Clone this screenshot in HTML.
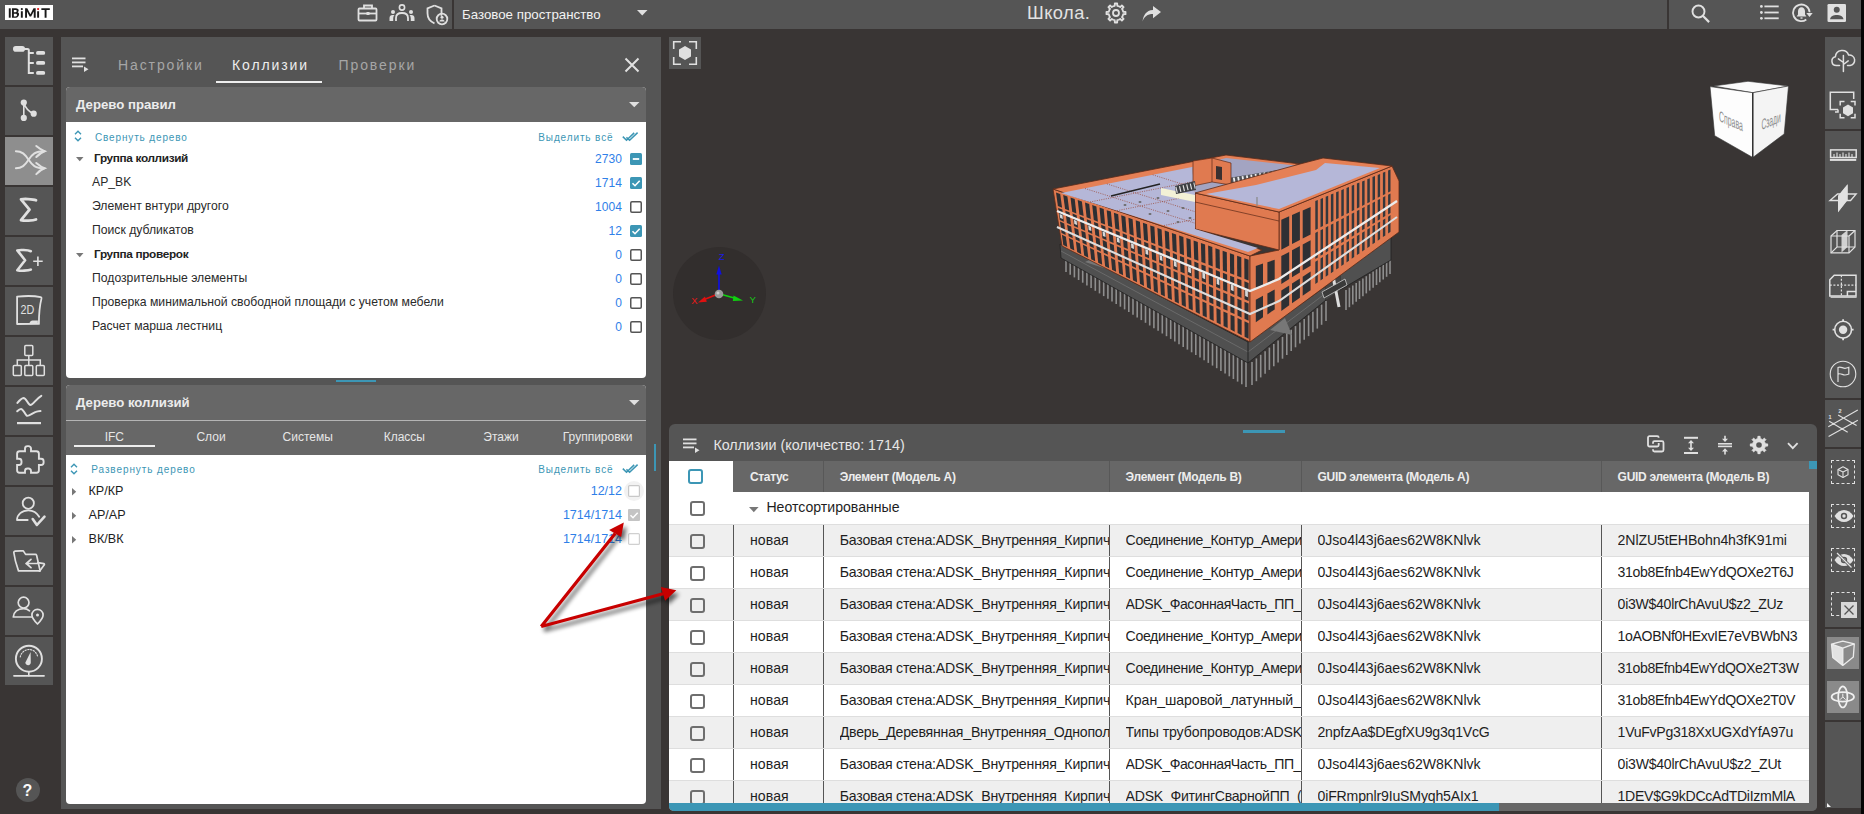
<!DOCTYPE html>
<html><head><meta charset="utf-8">
<style>
*{box-sizing:border-box;margin:0;padding:0}
html,body{width:1864px;height:814px;overflow:hidden;background:#393534;font-family:"Liberation Sans",sans-serif;position:relative}
.a{position:absolute}
.t{position:absolute;white-space:nowrap;line-height:1}
svg{position:absolute;overflow:visible}
.clip{position:absolute;overflow:hidden;white-space:nowrap}
</style></head><body>

<div class="a" style="left:0px;top:0px;width:1861px;height:29px;background:#555555;"></div>
<div class="a" style="left:5px;top:5px;width:48px;height:15px;background:#fff;"></div>
<svg style="left:5px;top:5px;" width="48" height="15" viewBox="0 0 48 15"><g transform="translate(3.8 3.3) scale(1.206 1.175) translate(-4 -3.5)">
<g fill="#1a1a1a">
<rect x="4" y="3.5" width="1.6" height="8"/>
<path d="M6.6 3.5h3.2c1.6 0 2.4 0.8 2.4 1.9c0 0.7-0.4 1.2-0.9 1.5c0.8 0.3 1.2 0.9 1.2 1.7c0 1.5-1.1 2.9-2.7 2.9h-3.2z M8.2 4.9v2h1.4c0.6 0 1-0.4 1-1c0-0.6-0.4-1-1-1z M8.2 8.2v2.2h1.5c0.7 0 1.1-0.5 1.1-1.1c0-0.6-0.4-1.1-1.1-1.1z"/>
<rect x="14" y="6" width="1.6" height="5.5"/>
<circle cx="14.8" cy="4.2" r="0.9"/>
<path d="M17.5 11.5v-8h1.8l2.6 5l2.6-5h1.8v8h-1.6v-5.2l-2.2 4.2h-1.2l-2.2-4.2v5.2z"/>
<rect x="27.5" y="6" width="1.6" height="5.5"/>
<path d="M31 3.5h7v1.5h-2.7v6.5h-1.6v-6.5h-2.7z"/>
</g>
<circle cx="28.3" cy="4.2" r="0.9" fill="#e01010"/></g>
</svg>
<svg style="left:357px;top:3px;" width="22" height="19" viewBox="0 0 22 19"><g fill="none" stroke="#e0e0e0" stroke-width="1.8">
<rect x="1.5" y="5.5" width="18" height="12" rx="1"/>
<path d="M7 5.5v-3h8v3"/><path d="M1.5 10.5h18"/></g>
<rect x="9.5" y="9" width="3" height="3" fill="#e0e0e0"/></svg>
<svg style="left:389px;top:4px;" width="26" height="18" viewBox="0 0 26 18"><g fill="#e0e0e0">
<circle cx="13" cy="3.5" r="2.6" fill="none" stroke="#e0e0e0" stroke-width="1.6"/>
<circle cx="4" cy="8" r="2"/><circle cx="22" cy="8" r="2"/>
<path d="M0.5 17v-3c0-2 1.2-3 3-3h2c-1 1-1.3 2.5-1.3 4v2z"/>
<path d="M25.5 17v-3c0-2-1.2-3-3-3h-2c1 1 1.3 2.5 1.3 4v2z"/>
</g>
<path d="M7 17v-3c0-3 2-5 6-5s6 2 6 5v3" fill="none" stroke="#e0e0e0" stroke-width="1.8"/></svg>
<svg style="left:426px;top:4px;" width="22" height="21" viewBox="0 0 22 21"><path d="M8.5 1.5l7 2.8v5c0 1 -0.1 1.8-0.3 2.5M8.5 1.5l-7 2.8v5c0 5 3 8.5 7 10" fill="none" stroke="#e0e0e0" stroke-width="1.8"/>
<circle cx="16" cy="15" r="5.3" fill="none" stroke="#e0e0e0" stroke-width="1.8"/>
<circle cx="16" cy="13.3" r="1.5" fill="#e0e0e0"/><path d="M13.3 17.6c0.5-1.5 1.5-2 2.7-2s2.2 0.5 2.7 2z" fill="#e0e0e0"/></svg>
<div class="a" style="left:452px;top:0px;width:2px;height:29px;background:#393534;"></div>
<div class="t" style="left:462px;top:8.14px;font-size:13.3px;color:#f2f2f2;font-weight:normal;letter-spacing:0px;">Базовое пространство</div>
<svg style="left:637px;top:10px;" width="11" height="6" viewBox="0 0 11 6"><path d="M0 0h10.5l-5.25 5.5z" fill="#e0e0e0"/></svg>
<div class="t" style="left:1027px;top:3.51px;font-size:18.3px;color:#e2e2e2;font-weight:normal;letter-spacing:0.45px;">Школа.</div>
<svg style="left:1105px;top:3px;" width="22" height="21" viewBox="0 0 22 21"><path d="M8.21 3.26L9.74 2.81L9.80 0.48L12.20 0.48L12.26 2.81L13.79 3.26L13.79 3.26L15.20 4.03L16.88 2.41L18.59 4.12L16.97 5.80L17.74 7.21L17.74 7.21L18.19 8.74L20.52 8.80L20.52 11.20L18.19 11.26L17.74 12.79L17.74 12.79L16.97 14.20L18.59 15.88L16.88 17.59L15.20 15.97L13.79 16.74L13.79 16.74L12.26 17.19L12.20 19.52L9.80 19.52L9.74 17.19L8.21 16.74L8.21 16.74L6.80 15.97L5.12 17.59L3.41 15.88L5.03 14.20L4.26 12.79L4.26 12.79L3.81 11.26L1.48 11.20L1.48 8.80L3.81 8.74L4.26 7.21L4.26 7.21L5.03 5.80L3.41 4.12L5.12 2.41L6.80 4.03L8.21 3.26Z" fill="none" stroke="#e0e0e0" stroke-width="1.8" stroke-linejoin="round"/><circle cx="11" cy="10" r="3" fill="none" stroke="#e0e0e0" stroke-width="1.8"/></svg>
<svg style="left:1142px;top:6px;" width="20" height="16" viewBox="0 0 20 16"><path d="M0.5 15.5c1.5-5 5-7.5 10.5-7.5v4.2l8-6.2l-8-6v4c-7 0.5-9.5 5-10.5 11.5z" fill="#e0e0e0"/></svg>
<div class="a" style="left:1667px;top:0px;width:2px;height:29px;background:#393534;"></div>
<svg style="left:1691px;top:4px;" width="20" height="19" viewBox="0 0 20 19"><circle cx="7.5" cy="7.5" r="6" fill="none" stroke="#e0e0e0" stroke-width="1.9"/><path d="M11.8 11.8l6.3 6.3" stroke="#e0e0e0" stroke-width="2.2"/></svg>
<svg style="left:1759px;top:4px;" width="21" height="17" viewBox="0 0 21 17"><g fill="#e0e0e0"><circle cx="2.4" cy="2.4" r="1.4"/><circle cx="2.4" cy="8.5" r="1.4"/><circle cx="2.4" cy="14.3" r="1.4"/><rect x="5.4" y="1.5" width="14.3" height="1.8"/><rect x="5.4" y="7.6" width="14.3" height="1.8"/><rect x="5.4" y="13.4" width="14.3" height="1.8"/></g></svg>
<svg style="left:1792px;top:3px;" width="23" height="20" viewBox="0 0 23 20"><path d="M17.6 9.2A8.3 8.3 0 1 0 14.3 16.5" fill="none" stroke="#e0e0e0" stroke-width="1.8"/>
<path d="M14.3 10.1h6.4l-3.2 3.8z" fill="#e0e0e0"/>
<path d="M9.5 4.2c-2.1 0-3.5 1.8-3.5 4v3.3l-1.4 2h9.8l-1.4-2v-3.3c0-2.2-1.4-4-3.5-4z" fill="#e0e0e0"/>
<ellipse cx="9.5" cy="15" rx="1.3" ry="0.8" fill="#e0e0e0"/></svg>
<svg style="left:1827px;top:4px;" width="20" height="18" viewBox="0 0 20 18"><rect x="0.5" y="0" width="18.5" height="18" rx="1.3" fill="#e0e0e0"/>
<circle cx="9.75" cy="5.8" r="3" fill="#555555"/>
<path d="M3 15.2c0.5-3 3.5-4.3 6.75-4.3s6.25 1.3 6.75 4.3z" fill="#555555"/></svg>
<div class="a" style="left:5px;top:37px;width:48px;height:48px;background:#555555;"></div>
<div class="a" style="left:5px;top:87px;width:48px;height:48px;background:#555555;"></div>
<div class="a" style="left:5px;top:137px;width:48px;height:48px;background:#8e8e8e;"></div>
<div class="a" style="left:5px;top:187px;width:48px;height:48px;background:#555555;"></div>
<div class="a" style="left:5px;top:237px;width:48px;height:48px;background:#555555;"></div>
<div class="a" style="left:5px;top:287px;width:48px;height:48px;background:#555555;"></div>
<div class="a" style="left:5px;top:337px;width:48px;height:48px;background:#555555;"></div>
<div class="a" style="left:5px;top:387px;width:48px;height:48px;background:#555555;"></div>
<div class="a" style="left:5px;top:437px;width:48px;height:48px;background:#555555;"></div>
<div class="a" style="left:5px;top:487px;width:48px;height:48px;background:#555555;"></div>
<div class="a" style="left:5px;top:537px;width:48px;height:48px;background:#555555;"></div>
<div class="a" style="left:5px;top:587px;width:48px;height:48px;background:#555555;"></div>
<div class="a" style="left:5px;top:637px;width:48px;height:48px;background:#555555;"></div>
<svg style="left:5px;top:37px;" width="48" height="48" viewBox="0 0 48 48"><g fill="#e0e0e0">
<rect x="8" y="9.1" width="12" height="5.6" rx="2.8"/>
<rect x="31" y="14" width="9.2" height="3.8" rx="1.9"/>
<rect x="31" y="24" width="9.2" height="3.8" rx="1.9"/>
<rect x="31" y="34" width="9.2" height="3.8" rx="1.9"/></g>
<path d="M18.5 11.9h4a1.3 1.3 0 0 1 1.3 1.3v22.7h5M23.8 15.9h5M23.8 25.9h5" fill="none" stroke="#e0e0e0" stroke-width="2"/></svg>
<svg style="left:5px;top:87px;" width="48" height="48" viewBox="0 0 48 48"><path d="M18.8 15.6v15.3M18.8 15.6c1.5 5 4 9 9.8 11" fill="none" stroke="#e0e0e0" stroke-width="1.6"/>
<g fill="#e0e0e0"><circle cx="18.8" cy="15.6" r="3.1"/><circle cx="18.8" cy="30.9" r="3.1"/><circle cx="28.7" cy="26.7" r="3.1"/></g></svg>
<svg style="left:5px;top:137px;" width="48" height="48" viewBox="0 0 48 48"><g fill="none" stroke="#e0e0e0" stroke-width="2" stroke-linecap="round">
<path d="M10.9 14.2c6 0 9 3 12.7 8.5s6.5 8.6 15.9 8.6"/>
<path d="M10.9 31.3c6 0 9-3 12.7-8.5s6.5-8.6 15.9-8.6"/>
<path d="M31.3 9c3 2.5 5 4 8.2 5.2c-3.2 1.2-5.5 3-8.2 5.8"/><path d="M31.3 26c3 2.5 5 4.1 8.2 5.3c-3.2 1.2-5.5 3-8.2 5.8"/></g></svg>
<svg style="left:5px;top:187px;" width="48" height="48" viewBox="0 0 48 48"><path d="M31 13.2c-3-1.3-13-1.5-15-0.8l8.5 10.2l-8.5 10.5c3 0.8 12 0.6 15-0.6" fill="none" stroke="#e0e0e0" stroke-width="2.8" stroke-linecap="round" stroke-linejoin="round"/></svg>
<svg style="left:5px;top:237px;" width="48" height="48" viewBox="0 0 48 48"><path d="M25.8 14.2c-3-1.3-11.5-1.5-13.5-0.8l7.8 9.8l-7.8 10c3 0.8 11 0.6 13.5-0.6" fill="none" stroke="#e0e0e0" stroke-width="2.6" stroke-linecap="round" stroke-linejoin="round"/>
<path d="M28.2 24.2h9.5M32.9 19.4v9.6" stroke="#e0e0e0" stroke-width="1.6"/></svg>
<svg style="left:5px;top:287px;" width="48" height="48" viewBox="0 0 48 48"><path d="M12.1 37V9.6c6-0.6 18-0.7 23.5 0.5c0.7 0.2 1 0.7 0.9 1.3c-1.5 6-2.6 14-2.6 25.5z" fill="none" stroke="#e0e0e0" stroke-width="1.8" stroke-linejoin="round"/>
<path d="M24.5 36c0.5-1.5 1.5-2.6 3-2.6h5.4v2.6z" fill="#e0e0e0"/>
<text transform="translate(15.6 26.9) scale(0.9 1)" font-family="Liberation Sans" font-size="12" fill="#e0e0e0">2D</text></svg>
<svg style="left:5px;top:337px;" width="48" height="48" viewBox="0 0 48 48"><g fill="none" stroke="#e0e0e0" stroke-width="1.5">
<rect x="19.8" y="8.5" width="8" height="10" rx="1"/>
<rect x="8.3" y="28.5" width="8" height="10" rx="1"/>
<rect x="19.8" y="28.5" width="8" height="10" rx="1"/>
<rect x="31.3" y="28.5" width="8" height="10" rx="1"/>
<path d="M23.8 18.5v10M12.3 28.5v-5.5h23v5.5"/></g></svg>
<svg style="left:5px;top:387px;" width="48" height="48" viewBox="0 0 48 48"><g fill="none" stroke="#e0e0e0" stroke-width="2" stroke-linecap="round">
<path d="M12.4 15.9c2-2.5 4-4.8 6.2-5c2.5 0 4.5 7 6.8 7.1c2.5 0 6-6.5 10.9-9.2"/>
<path d="M12.2 24.2c1.5-1.5 2.5-2.3 3.8-2.3c2.2 0 3.5 4.8 5.8 6.8c1.5 1 6-2.8 9-3.8c1.5-0.6 3.5-0.8 4.7-0.9"/></g>
<rect x="12" y="35" width="24" height="2.2" fill="#e0e0e0"/></svg>
<svg style="left:5px;top:437px;" width="48" height="48" viewBox="0 0 48 48"><path d="M14.6 14.2H20V11.6a2.5 2.5 0 0 1 2.5-2.5h1a2.5 2.5 0 0 1 2.5 2.5V14.2H31.4a2.5 2.5 0 0 1 2.5 2.5V21.8H36.1a2.5 2.5 0 0 1 2.5 2.5v1.2a2.5 2.5 0 0 1-2.5 2.5H33.9V33.2a2.5 2.5 0 0 1-2.5 2.5H26V34a2.5 2.5 0 0 0-2.5-2.5h-1a2.5 2.5 0 0 0-2.5 2.5V35.7H14.6a2.5 2.5 0 0 1-2.5-2.5V28H14a2.5 2.5 0 0 0 2.5-2.5v-1.2a2.5 2.5 0 0 0-2.5-2.5H12.1V16.7a2.5 2.5 0 0 1 2.5-2.5z" fill="none" stroke="#e0e0e0" stroke-width="1.9"/></svg>
<svg style="left:5px;top:487px;" width="48" height="48" viewBox="0 0 48 48"><g fill="none" stroke="#e0e0e0" stroke-width="1.8" stroke-linecap="round" stroke-linejoin="round">
<circle cx="23.3" cy="16.2" r="5.6"/>
<path d="M22.7 33H12c0-5.5 5-9.7 11.3-9.7c5 0 8.8 2.7 10.9 6.5"/>
<path d="M27.7 32l4.2 6l7.6-8.4" stroke-width="2.6"/></g></svg>
<svg style="left:5px;top:537px;" width="48" height="48" viewBox="0 0 48 48"><g fill="none" stroke="#e0e0e0" stroke-width="1.7" stroke-linejoin="round" stroke-linecap="round">
<path d="M13.5 33.9C11 27 9.5 21 8.8 15.5c0-0.8 0.5-1.3 1.3-1.4c2.5-0.3 5.5-0.4 8.2-0.2l2.3 3.5h9.8c0.6 0 1 0.3 1.2 0.8l3.5 15.7z"/>
<path d="M34.5 34.2l4.8-6.4c0.3-0.5 0-1-0.5-1.1l-6-1.1"/>
<path d="M21 26.5h12.5M26 22.4l-4.7 4.1l4.7 4.2"/></g></svg>
<svg style="left:5px;top:587px;" width="48" height="48" viewBox="0 0 48 48"><g fill="none" stroke="#e0e0e0" stroke-width="1.7" stroke-linecap="round" stroke-linejoin="round">
<circle cx="18.6" cy="15.6" r="5.4"/>
<path d="M24.5 23.8c-1.5-1.3-3.5-2.2-5.9-2.2c-6 0-10 3.5-10.3 8.4h18"/>
<path d="M32.5 37c-3-3-5.6-6-5.6-9c0-3.2 2.5-5.6 5.6-5.6s5.6 2.4 5.6 5.6c0 3-2.6 6-5.6 9z"/></g>
<circle cx="32.5" cy="28.1" r="1.5" fill="#e0e0e0"/></svg>
<svg style="left:5px;top:637px;" width="48" height="48" viewBox="0 0 48 48"><g fill="none" stroke="#e0e0e0" stroke-linecap="round">
<circle cx="23.9" cy="21.7" r="13" stroke-width="1.9"/>
<path d="M15.3 20a8.8 8.8 0 0 1 17.4 0" stroke-width="1.1" stroke-dasharray="1.3 1.5"/>
<path d="M9 38.8h30" stroke-width="1.8"/>
<path d="M23.8 35v3.8" stroke-width="1.6"/></g>
<path d="M20.3 25.8c0.3 1.5 1.6 2.5 3 2.4c1.5-0.1 2.5-1.3 2.5-2.7l-0.2-10.6z" fill="#e0e0e0"/></svg>
<div class="a" style="left:16px;top:778px;width:24px;height:24px;border-radius:50%;background:#555555"></div>
<div class="t" style="left:22.6px;top:782.76px;font-size:16px;color:#fafafa;font-weight:bold;letter-spacing:0px;">?</div>
<div class="a" style="left:61px;top:37px;width:600px;height:772px;background:#555555;"></div>
<svg style="left:72px;top:57px;" width="17" height="15" viewBox="0 0 17 15"><g fill="#e0e0e0"><rect x="0" y="0.5" width="13.5" height="1.8"/><rect x="0" y="4.5" width="13.5" height="1.8"/><rect x="0" y="8.5" width="11" height="1.8"/><path d="M12 9.5l4.5 2.7l-4.5 2.7z"/></g></svg>
<div class="t" style="left:118px;top:58.15px;font-size:14px;color:#a6a6a6;font-weight:normal;letter-spacing:1.9px;">Настройки</div>
<div class="t" style="left:232px;top:58.15px;font-size:14px;color:#ededed;font-weight:normal;letter-spacing:1.9px;">Коллизии</div>
<div class="t" style="left:338.5px;top:58.15px;font-size:14px;color:#a6a6a6;font-weight:normal;letter-spacing:1.9px;">Проверки</div>
<div class="a" style="left:216px;top:81px;width:106px;height:2.2px;background:#eeeeee;"></div>
<svg style="left:624px;top:57px;" width="16" height="16" viewBox="0 0 16 16"><path d="M1.5 1.5l13 13M14.5 1.5l-13 13" stroke="#e0e0e0" stroke-width="2"/></svg>
<div class="a" style="left:66px;top:87px;width:580px;height:291px;background:#fff;border-radius:4px;overflow:hidden"><div class="a" style="left:0;top:0;width:580px;height:35px;background:#676767"></div></div>
<div class="t" style="left:76px;top:98.33px;font-size:13.2px;color:#ececec;font-weight:bold;letter-spacing:0px;">Дерево правил</div>
<svg style="left:629px;top:102px;" width="11" height="6" viewBox="0 0 11 6"><path d="M0 0h10.5l-5.25 5.3z" fill="#e0e0e0"/></svg>
<svg style="left:74px;top:130px;" width="8" height="12" viewBox="0 0 8 12"><path d="M1 4.2l3-3l3 3M1 7.8l3 3l3-3" fill="none" stroke="#3c96b5" stroke-width="1.4"/></svg>
<div class="t" style="left:95px;top:132.53px;font-size:10px;color:#3c96b5;font-weight:normal;letter-spacing:0.85px;">Свернуть дерево</div>
<div class="t" style="right:1250.5px;top:132.53px;font-size:10px;color:#3c96b5;font-weight:normal;letter-spacing:0.88px">Выделить всё</div>
<svg style="left:622px;top:132px;" width="17" height="10" viewBox="0 0 17 10"><path d="M0.8 4.6L4.5 8.3L12.2 0.9M4.4 5.4L7.6 8.3L15.6 0.6" fill="none" stroke="#3c96b5" stroke-width="1.5"/></svg>
<svg style="left:76px;top:156.5px;" width="8" height="5" viewBox="0 0 8 5"><path d="M0 0h7.5l-3.75 4.2z" fill="#777"/></svg>
<div class="t" style="left:94px;top:152.81px;font-size:11.8px;color:#222;font-weight:bold;letter-spacing:-0.35px;">Группа коллизий</div>
<div class="t" style="right:1242.2px;top:153.14px;font-size:12px;color:#2f80e8;font-weight:normal;letter-spacing:0px">2730</div>
<svg style="left:630px;top:153px;" width="12" height="12" viewBox="0 0 12 12"><rect x="0" y="0" width="12" height="12" rx="1.5" fill="#3c96b5"/><rect x="2.8" y="5.1" width="6.4" height="1.8" fill="#fff"/></svg>
<div class="t" style="left:92px;top:175.67px;font-size:12.2px;color:#2a2a2a;font-weight:normal;letter-spacing:0px;">AP_BK</div>
<div class="t" style="right:1242.2px;top:177.14px;font-size:12px;color:#2f80e8;font-weight:normal;letter-spacing:0px">1714</div>
<svg style="left:630px;top:177px;" width="12" height="12" viewBox="0 0 12 12"><rect x="0" y="0" width="12" height="12" rx="1.5" fill="#3c96b5"/><path d="M2.5 6.2l2.5 2.5l4.7-5" fill="none" stroke="#fff" stroke-width="1.6"/></svg>
<div class="t" style="left:92px;top:199.67px;font-size:12.2px;color:#2a2a2a;font-weight:normal;letter-spacing:0px;">Элемент внтури другого</div>
<div class="t" style="right:1242.2px;top:201.14px;font-size:12px;color:#2f80e8;font-weight:normal;letter-spacing:0px">1004</div>
<svg style="left:630px;top:201px;" width="12" height="12" viewBox="0 0 12 12"><rect x="0.75" y="0.75" width="10.5" height="10.5" rx="1.2" fill="#fff" stroke="#555" stroke-width="1.5"/></svg>
<div class="t" style="left:92px;top:223.67px;font-size:12.2px;color:#2a2a2a;font-weight:normal;letter-spacing:0px;">Поиск дубликатов</div>
<div class="t" style="right:1242.2px;top:225.14px;font-size:12px;color:#2f80e8;font-weight:normal;letter-spacing:0px">12</div>
<svg style="left:630px;top:225px;" width="12" height="12" viewBox="0 0 12 12"><rect x="0" y="0" width="12" height="12" rx="1.5" fill="#3c96b5"/><path d="M2.5 6.2l2.5 2.5l4.7-5" fill="none" stroke="#fff" stroke-width="1.6"/></svg>
<svg style="left:76px;top:252.5px;" width="8" height="5" viewBox="0 0 8 5"><path d="M0 0h7.5l-3.75 4.2z" fill="#777"/></svg>
<div class="t" style="left:94px;top:248.81px;font-size:11.8px;color:#222;font-weight:bold;letter-spacing:-0.35px;">Группа проверок</div>
<div class="t" style="right:1242.2px;top:249.14px;font-size:12px;color:#2f80e8;font-weight:normal;letter-spacing:0px">0</div>
<svg style="left:630px;top:249px;" width="12" height="12" viewBox="0 0 12 12"><rect x="0.75" y="0.75" width="10.5" height="10.5" rx="1.2" fill="#fff" stroke="#555" stroke-width="1.5"/></svg>
<div class="t" style="left:92px;top:271.67px;font-size:12.2px;color:#2a2a2a;font-weight:normal;letter-spacing:0px;">Подозрительные элементы</div>
<div class="t" style="right:1242.2px;top:273.14px;font-size:12px;color:#2f80e8;font-weight:normal;letter-spacing:0px">0</div>
<svg style="left:630px;top:273px;" width="12" height="12" viewBox="0 0 12 12"><rect x="0.75" y="0.75" width="10.5" height="10.5" rx="1.2" fill="#fff" stroke="#555" stroke-width="1.5"/></svg>
<div class="t" style="left:92px;top:295.67px;font-size:12.2px;color:#2a2a2a;font-weight:normal;letter-spacing:0px;">Проверка минимальной свободной площади с учетом мебели</div>
<div class="t" style="right:1242.2px;top:297.14px;font-size:12px;color:#2f80e8;font-weight:normal;letter-spacing:0px">0</div>
<svg style="left:630px;top:297px;" width="12" height="12" viewBox="0 0 12 12"><rect x="0.75" y="0.75" width="10.5" height="10.5" rx="1.2" fill="#fff" stroke="#555" stroke-width="1.5"/></svg>
<div class="t" style="left:92px;top:319.67px;font-size:12.2px;color:#2a2a2a;font-weight:normal;letter-spacing:0px;">Расчет марша лестниц</div>
<div class="t" style="right:1242.2px;top:321.14px;font-size:12px;color:#2f80e8;font-weight:normal;letter-spacing:0px">0</div>
<svg style="left:630px;top:321px;" width="12" height="12" viewBox="0 0 12 12"><rect x="0.75" y="0.75" width="10.5" height="10.5" rx="1.2" fill="#fff" stroke="#555" stroke-width="1.5"/></svg>
<div class="a" style="left:336px;top:380px;width:40px;height:2px;background:#3c96b5;"></div>
<div class="a" style="left:66px;top:385px;width:580px;height:419px;background:#fff;border-radius:4px;overflow:hidden"><div class="a" style="left:0;top:0;width:580px;height:70px;background:#676767"></div><div class="a" style="left:0;top:35px;width:580px;height:1.2px;background:#b4b4b4"></div></div>
<div class="t" style="left:76px;top:396.13px;font-size:13.2px;color:#ececec;font-weight:bold;letter-spacing:0px;">Дерево коллизий</div>
<svg style="left:629px;top:400px;" width="11" height="6" viewBox="0 0 11 6"><path d="M0 0h10.5l-5.25 5.3z" fill="#e0e0e0"/></svg>
<div class="t" style="left:54.33px;width:120px;text-align:center;top:430.84px;font-size:12px;color:#e6e6e6">IFC</div>
<div class="t" style="left:151.00px;width:120px;text-align:center;top:430.84px;font-size:12px;color:#e6e6e6">Слои</div>
<div class="t" style="left:247.67px;width:120px;text-align:center;top:430.84px;font-size:12px;color:#e6e6e6">Системы</div>
<div class="t" style="left:344.33px;width:120px;text-align:center;top:430.84px;font-size:12px;color:#e6e6e6">Классы</div>
<div class="t" style="left:441.00px;width:120px;text-align:center;top:430.84px;font-size:12px;color:#e6e6e6">Этажи</div>
<div class="t" style="left:537.67px;width:120px;text-align:center;top:430.84px;font-size:12px;color:#e6e6e6">Группировки</div>
<div class="a" style="left:74px;top:445px;width:81px;height:2.2px;background:#eeeeee;"></div>
<svg style="left:70px;top:463px;" width="8" height="12" viewBox="0 0 8 12"><path d="M1 4.2l3-3l3 3M1 7.8l3 3l3-3" fill="none" stroke="#3c96b5" stroke-width="1.4"/></svg>
<div class="t" style="left:91.3px;top:464.74px;font-size:10px;color:#3c96b5;font-weight:normal;letter-spacing:0.9px;">Развернуть дерево</div>
<div class="t" style="right:1250.5px;top:464.74px;font-size:10px;color:#3c96b5;font-weight:normal;letter-spacing:0.88px">Выделить всё</div>
<svg style="left:622px;top:464px;" width="17" height="10" viewBox="0 0 17 10"><path d="M0.8 4.6L4.5 8.3L12.2 0.9M4.4 5.4L7.6 8.3L15.6 0.6" fill="none" stroke="#3c96b5" stroke-width="1.5"/></svg>
<svg style="left:72px;top:487.5px;" width="5" height="8" viewBox="0 0 5 8"><path d="M0 0v7.5l4.2-3.75z" fill="#777"/></svg>
<div class="t" style="left:88.5px;top:485.13px;font-size:12.6px;color:#1e1e1e;font-weight:normal;letter-spacing:0px;">КР/КР</div>
<div class="t" style="right:1242px;top:484.92px;font-size:12.5px;color:#2f80e8;font-weight:normal;letter-spacing:0px">12/12</div>
<svg style="left:72px;top:511.5px;" width="5" height="8" viewBox="0 0 5 8"><path d="M0 0v7.5l4.2-3.75z" fill="#777"/></svg>
<div class="t" style="left:88.5px;top:509.13px;font-size:12.6px;color:#1e1e1e;font-weight:normal;letter-spacing:0px;">АР/АР</div>
<div class="t" style="right:1242px;top:508.92px;font-size:12.5px;color:#2f80e8;font-weight:normal;letter-spacing:0px">1714/1714</div>
<svg style="left:72px;top:535.5px;" width="5" height="8" viewBox="0 0 5 8"><path d="M0 0v7.5l4.2-3.75z" fill="#777"/></svg>
<div class="t" style="left:88.5px;top:533.13px;font-size:12.6px;color:#1e1e1e;font-weight:normal;letter-spacing:0px;">ВК/ВК</div>
<div class="t" style="right:1242px;top:532.92px;font-size:12.5px;color:#2f80e8;font-weight:normal;letter-spacing:0px">1714/1714</div>
<div class="a" style="left:623.8px;top:481px;width:20px;height:20px;border-radius:50%;background:#f2f2f2"></div>
<svg style="left:627.8px;top:485px;" width="12" height="12" viewBox="0 0 12 12"><rect x="0.6" y="0.6" width="10.8" height="10.8" rx="1" fill="#fff" stroke="#c8c8c8" stroke-width="1.2"/></svg>
<svg style="left:627.8px;top:509px;" width="12" height="12" viewBox="0 0 12 12"><rect x="0" y="0" width="12" height="12" rx="1" fill="#c4c4c4"/><path d="M2.5 6.2l2.5 2.5l4.7-5" fill="none" stroke="#fff" stroke-width="1.5"/></svg>
<svg style="left:627.8px;top:533px;" width="12" height="12" viewBox="0 0 12 12"><rect x="0.6" y="0.6" width="10.8" height="10.8" rx="1" fill="#fff" stroke="#d0d0d0" stroke-width="1.2"/></svg>
<div class="a" style="left:654px;top:444px;width:2px;height:27px;background:#3c96b5;"></div>
<div class="a" style="left:669px;top:37px;width:32px;height:32px;background:#555555;"></div>
<svg style="left:669px;top:37px;" width="32" height="32" viewBox="0 0 32 32"><g fill="none" stroke="#e0e0e0" stroke-width="1.6">
<path d="M4.7 12v-7.2h7.3M20 4.8h7.3v7.2M27.3 20v7.2h-7.3M12 27.2h-7.3v-7.2"/></g>
<path d="M16 8.9l6 3.5v7l-6 3.5l-6-3.5v-7z" fill="#e0e0e0"/></svg>
<div class="a" style="left:672.5px;top:247px;width:93px;height:93px;border-radius:50%;background:#322e2d"></div>
<svg style="left:660px;top:230px;" width="130" height="120" viewBox="0 0 130 120">
<path d="M59 64V42" stroke="#1010e0" stroke-width="1.7"/>
<path d="M56.3 44.5L59 35.5L61.7 44.5z" fill="#1010e0"/>
<text x="58.8" y="30.2" font-family="Liberation Sans" font-size="9.5" fill="#1a1ae8">Z</text>
<path d="M58 64L43 70" stroke="#e01010" stroke-width="1.7"/>
<path d="M38 72.5L45 66.5L46.8 71.8z" fill="#e01010"/>
<text x="31.3" y="74.4" font-family="Liberation Sans" font-size="9.5" fill="#e81a1a">X</text>
<path d="M60 64L76 68.5" stroke="#10d010" stroke-width="1.7"/>
<path d="M83 70.5L73.5 65.5L72.8 71z" fill="#10d010"/>
<text x="89.6" y="73" font-family="Liberation Sans" font-size="9.5" fill="#18c818">Y</text>
<circle cx="59" cy="64" r="4.3" fill="#9a9a9a"/><circle cx="58" cy="63" r="1.5" fill="#ccc"/>
</svg>
<svg style="left:1700px;top:70px;" width="100" height="100" viewBox="0 0 100 100">
<path d="M13.3 16l34.7-4.7l40.5 4.7l-35.7 6.7z" fill="#fafafa" stroke="#333" stroke-width="0.6"/>
<path d="M10 16.6l42.8 6.1v64.8l-38.1-21.8z" fill="#fdfdfd" stroke="#333" stroke-width="0.6"/>
<path d="M52.8 22.7l35.7-6.7l-4.3 47.9l-31.4 23.6z" fill="#f4f4f4" stroke="#333" stroke-width="0.6"/>
<path d="M52.8 22.7v64.8" stroke="#222" stroke-width="1.2"/>
<text x="0" y="0" font-family="Liberation Sans" font-size="15" fill="#8c8c8c" transform="matrix(0.46 0.2 0 1 19 51)">Справа</text>
<text x="0" y="0" font-family="Liberation Sans" font-size="15" fill="#8c8c8c" transform="matrix(0.45 -0.19 0 1 61.4 60)">Сзади</text>
</svg>
<svg style="left:1030px;top:140px;overflow:hidden" width="390" height="260" viewBox="1030 140 390 260"><g><path d="M1066.0 259.0v13.0" stroke="#8e8e8e" stroke-width="1.6"/><path d="M1070.2 261.4v13.3" stroke="#8e8e8e" stroke-width="1.6"/><path d="M1074.4 263.8v13.6" stroke="#8e8e8e" stroke-width="1.6"/><path d="M1078.6 266.2v13.8" stroke="#8e8e8e" stroke-width="1.6"/><path d="M1082.7 268.6v14.1" stroke="#8e8e8e" stroke-width="1.6"/><path d="M1086.9 271.0v14.4" stroke="#8e8e8e" stroke-width="1.6"/><path d="M1091.1 273.4v14.7" stroke="#8e8e8e" stroke-width="1.6"/><path d="M1095.3 275.8v15.0" stroke="#8e8e8e" stroke-width="1.6"/><path d="M1099.5 278.2v15.2" stroke="#8e8e8e" stroke-width="1.6"/><path d="M1103.7 280.6v15.5" stroke="#8e8e8e" stroke-width="1.6"/><path d="M1107.9 283.0v15.8" stroke="#8e8e8e" stroke-width="1.6"/><path d="M1112.0 285.3v16.1" stroke="#8e8e8e" stroke-width="1.6"/><path d="M1116.2 287.7v16.3" stroke="#8e8e8e" stroke-width="1.6"/><path d="M1120.4 290.1v16.6" stroke="#8e8e8e" stroke-width="1.6"/><path d="M1124.6 292.5v16.9" stroke="#8e8e8e" stroke-width="1.6"/><path d="M1128.8 294.9v17.2" stroke="#8e8e8e" stroke-width="1.6"/><path d="M1133.0 297.3v17.5" stroke="#8e8e8e" stroke-width="1.6"/><path d="M1137.2 299.7v17.7" stroke="#8e8e8e" stroke-width="1.6"/><path d="M1141.3 302.1v18.0" stroke="#8e8e8e" stroke-width="1.6"/><path d="M1145.5 304.5v18.3" stroke="#8e8e8e" stroke-width="1.6"/><path d="M1149.7 306.9v18.6" stroke="#8e8e8e" stroke-width="1.6"/><path d="M1153.9 309.3v18.9" stroke="#8e8e8e" stroke-width="1.6"/><path d="M1158.1 311.7v19.1" stroke="#8e8e8e" stroke-width="1.6"/><path d="M1162.3 314.1v19.4" stroke="#8e8e8e" stroke-width="1.6"/><path d="M1166.5 316.5v19.7" stroke="#8e8e8e" stroke-width="1.6"/><path d="M1170.7 318.9v20.0" stroke="#8e8e8e" stroke-width="1.6"/><path d="M1174.8 321.3v20.3" stroke="#8e8e8e" stroke-width="1.6"/><path d="M1179.0 323.7v20.5" stroke="#8e8e8e" stroke-width="1.6"/><path d="M1183.2 326.1v20.8" stroke="#8e8e8e" stroke-width="1.6"/><path d="M1187.4 328.5v21.1" stroke="#8e8e8e" stroke-width="1.6"/><path d="M1191.6 330.9v21.4" stroke="#8e8e8e" stroke-width="1.6"/><path d="M1195.8 333.3v21.7" stroke="#8e8e8e" stroke-width="1.6"/><path d="M1200.0 335.7v21.9" stroke="#8e8e8e" stroke-width="1.6"/><path d="M1204.1 338.0v22.2" stroke="#8e8e8e" stroke-width="1.6"/><path d="M1208.3 340.4v22.5" stroke="#8e8e8e" stroke-width="1.6"/><path d="M1212.5 342.8v22.8" stroke="#8e8e8e" stroke-width="1.6"/><path d="M1216.7 345.2v23.0" stroke="#8e8e8e" stroke-width="1.6"/><path d="M1220.9 347.6v23.3" stroke="#8e8e8e" stroke-width="1.6"/><path d="M1225.1 350.0v23.6" stroke="#8e8e8e" stroke-width="1.6"/><path d="M1229.3 352.4v23.9" stroke="#8e8e8e" stroke-width="1.6"/><path d="M1233.4 354.8v24.2" stroke="#8e8e8e" stroke-width="1.6"/><path d="M1237.6 357.2v24.4" stroke="#8e8e8e" stroke-width="1.6"/><path d="M1241.8 359.6v24.7" stroke="#8e8e8e" stroke-width="1.6"/><path d="M1246.0 362.0v25.0" stroke="#8e8e8e" stroke-width="1.6"/><path d="M1252.0 362.0v23.0" stroke="#8e8e8e" stroke-width="1.6"/><path d="M1256.4 358.4v22.8" stroke="#8e8e8e" stroke-width="1.6"/><path d="M1260.7 354.8v22.6" stroke="#8e8e8e" stroke-width="1.6"/><path d="M1265.1 351.2v22.5" stroke="#8e8e8e" stroke-width="1.6"/><path d="M1269.4 347.6v22.3" stroke="#8e8e8e" stroke-width="1.6"/><path d="M1273.8 344.1v22.1" stroke="#8e8e8e" stroke-width="1.6"/><path d="M1278.1 340.5v21.9" stroke="#8e8e8e" stroke-width="1.6"/><path d="M1282.5 336.9v21.8" stroke="#8e8e8e" stroke-width="1.6"/><path d="M1286.8 333.3v21.6" stroke="#8e8e8e" stroke-width="1.6"/><path d="M1291.2 329.7v21.4" stroke="#8e8e8e" stroke-width="1.6"/><path d="M1295.5 326.1v21.2" stroke="#8e8e8e" stroke-width="1.6"/><path d="M1299.9 322.5v21.1" stroke="#8e8e8e" stroke-width="1.6"/><path d="M1304.2 318.9v20.9" stroke="#8e8e8e" stroke-width="1.6"/><path d="M1308.6 315.4v20.7" stroke="#8e8e8e" stroke-width="1.6"/><path d="M1312.9 311.8v20.5" stroke="#8e8e8e" stroke-width="1.6"/><path d="M1317.3 308.2v20.4" stroke="#8e8e8e" stroke-width="1.6"/><path d="M1321.6 304.6v20.2" stroke="#8e8e8e" stroke-width="1.6"/><path d="M1326.0 301.0v20.0" stroke="#8e8e8e" stroke-width="1.6"/><path d="M1346.0 290.0v20.0" stroke="#8e8e8e" stroke-width="1.6"/><path d="M1349.4 287.7v19.5" stroke="#8e8e8e" stroke-width="1.6"/><path d="M1352.8 285.4v19.1" stroke="#8e8e8e" stroke-width="1.6"/><path d="M1356.2 283.1v18.6" stroke="#8e8e8e" stroke-width="1.6"/><path d="M1359.5 280.8v18.2" stroke="#8e8e8e" stroke-width="1.6"/><path d="M1362.9 278.5v17.7" stroke="#8e8e8e" stroke-width="1.6"/><path d="M1366.3 276.2v17.2" stroke="#8e8e8e" stroke-width="1.6"/><path d="M1369.7 273.8v16.8" stroke="#8e8e8e" stroke-width="1.6"/><path d="M1373.1 271.5v16.3" stroke="#8e8e8e" stroke-width="1.6"/><path d="M1376.5 269.2v15.8" stroke="#8e8e8e" stroke-width="1.6"/><path d="M1379.8 266.9v15.4" stroke="#8e8e8e" stroke-width="1.6"/><path d="M1383.2 264.6v14.9" stroke="#8e8e8e" stroke-width="1.6"/><path d="M1386.6 262.3v14.5" stroke="#8e8e8e" stroke-width="1.6"/><path d="M1390.0 260.0v14.0" stroke="#8e8e8e" stroke-width="1.6"/><path d="M1060 244L1248 342L1326 286L1326 300L1248 363L1061 258z" fill="#505050" stroke="#222" stroke-width="0.8"/><path d="M1061 251L1248 352L1326 293" fill="none" stroke="#6a6a6a" stroke-width="1"/><path d="M1248 342L1248 363" stroke="#222" stroke-width="1"/><path d="M1340 268L1391 236L1391 260L1340 290z" fill="#505050" stroke="#222" stroke-width="0.8"/><path d="M1326 286L1340 276L1340 290L1326 300z" fill="#444"/><path d="M1333 276L1339 307" stroke="#ddd" stroke-width="3"/><path d="M1085 262L1100 255L1110 270z M1270 330L1285 318L1292 335z" fill="#777"/><path d="M1053 189L1250 256L1250 342L1062 246z" fill="#e07a50" stroke="#5b2a18" stroke-width="0.8"/><path d="M1056.0 192.4L1060.2 193.9L1062.1 207.8L1057.9 206.1z" fill="#2d2f33" /><path d="M1058.1 207.9L1062.3 209.5L1063.9 221.7L1059.8 219.9z" fill="#2d2f33" /><path d="M1060.0 221.6L1064.2 223.4L1065.7 235.0L1061.6 233.0z" fill="#2d2f33" /><path d="M1061.9 234.8L1065.9 236.7L1067.3 247.1L1063.3 245.1z" fill="#2d2f33" /><path d="M1059.6 213.9L1062.4 215.0L1062.9 219.0L1060.2 217.9z" fill="#d8d8d8" /><path d="M1063.2 194.9L1067.4 196.4L1069.2 210.6L1065.1 208.9z" fill="#2d2f33" /><path d="M1065.3 210.7L1069.5 212.3L1071.0 224.7L1066.9 222.9z" fill="#2d2f33" /><path d="M1067.1 224.7L1071.2 226.5L1072.7 238.3L1068.7 236.3z" fill="#2d2f33" /><path d="M1068.9 238.1L1073.0 240.0L1074.3 250.6L1070.3 248.6z" fill="#2d2f33" /><path d="M1070.5 197.5L1074.7 198.9L1076.4 213.4L1072.2 211.7z" fill="#2d2f33" /><path d="M1072.5 213.5L1076.6 215.2L1078.1 227.8L1074.0 226.0z" fill="#2d2f33" /><path d="M1074.2 227.8L1078.3 229.6L1079.8 241.6L1075.7 239.6z" fill="#2d2f33" /><path d="M1075.9 241.4L1080.0 243.4L1081.3 254.2L1077.2 252.1z" fill="#2d2f33" /><path d="M1073.9 219.7L1076.6 220.9L1077.1 225.1L1074.4 223.9z" fill="#d8d8d8" /><path d="M1077.7 200.0L1081.9 201.5L1083.6 216.1L1079.4 214.5z" fill="#2d2f33" /><path d="M1079.6 216.3L1083.8 218.0L1085.2 230.8L1081.1 229.0z" fill="#2d2f33" /><path d="M1081.3 230.8L1085.4 232.6L1086.8 244.9L1082.7 242.9z" fill="#2d2f33" /><path d="M1082.9 244.8L1087.0 246.7L1088.3 257.7L1084.2 255.6z" fill="#2d2f33" /><path d="M1085.0 202.5L1089.2 204.0L1090.8 218.9L1086.6 217.3z" fill="#2d2f33" /><path d="M1086.8 219.2L1090.9 220.8L1092.3 233.9L1088.2 232.1z" fill="#2d2f33" /><path d="M1088.4 233.9L1092.5 235.7L1093.8 248.1L1089.8 246.2z" fill="#2d2f33" /><path d="M1090.0 248.1L1094.0 250.0L1095.2 261.2L1091.2 259.2z" fill="#2d2f33" /><path d="M1088.2 225.6L1090.9 226.7L1091.4 231.1L1088.7 229.9z" fill="#d8d8d8" /><path d="M1092.2 205.1L1096.4 206.6L1097.9 221.7L1093.8 220.1z" fill="#2d2f33" /><path d="M1094.0 222.0L1098.1 223.6L1099.4 236.9L1095.3 235.1z" fill="#2d2f33" /><path d="M1095.5 237.0L1099.6 238.8L1100.9 251.4L1096.8 249.5z" fill="#2d2f33" /><path d="M1097.0 251.4L1101.1 253.3L1102.2 264.7L1098.2 262.7z" fill="#2d2f33" /><path d="M1099.5 207.6L1103.7 209.1L1105.1 224.5L1100.9 222.9z" fill="#2d2f33" /><path d="M1101.1 224.8L1105.3 226.5L1106.5 240.0L1102.4 238.2z" fill="#2d2f33" /><path d="M1102.6 240.1L1106.7 241.9L1107.9 254.7L1103.8 252.8z" fill="#2d2f33" /><path d="M1104.0 254.7L1108.1 256.7L1109.2 268.2L1105.1 266.2z" fill="#2d2f33" /><path d="M1102.5 231.5L1105.2 232.6L1105.6 237.1L1102.9 235.9z" fill="#d8d8d8" /><path d="M1106.7 210.2L1110.9 211.6L1112.3 227.3L1108.1 225.7z" fill="#2d2f33" /><path d="M1108.3 227.6L1112.4 229.3L1113.6 243.0L1109.5 241.2z" fill="#2d2f33" /><path d="M1109.7 243.2L1113.8 245.0L1114.9 258.0L1110.9 256.1z" fill="#2d2f33" /><path d="M1111.0 258.1L1115.1 260.0L1116.1 271.8L1112.1 269.7z" fill="#2d2f33" /><path d="M1113.9 212.7L1118.2 214.2L1119.4 230.1L1115.3 228.5z" fill="#2d2f33" /><path d="M1115.5 230.5L1119.6 232.1L1120.7 246.1L1116.6 244.3z" fill="#2d2f33" /><path d="M1116.8 246.3L1120.9 248.1L1122.0 261.3L1117.9 259.4z" fill="#2d2f33" /><path d="M1118.1 261.4L1122.1 263.3L1123.1 275.3L1119.1 273.3z" fill="#2d2f33" /><path d="M1116.7 237.3L1119.4 238.5L1119.8 243.1L1117.1 242.0z" fill="#d8d8d8" /><path d="M1121.2 215.2L1125.4 216.7L1126.6 232.9L1122.5 231.3z" fill="#2d2f33" /><path d="M1122.6 233.3L1126.8 234.9L1127.8 249.1L1123.7 247.3z" fill="#2d2f33" /><path d="M1123.9 249.3L1128.0 251.1L1129.0 264.6L1124.9 262.7z" fill="#2d2f33" /><path d="M1125.1 264.7L1129.2 266.7L1130.1 278.8L1126.0 276.8z" fill="#2d2f33" /><path d="M1128.4 217.8L1132.6 219.2L1133.8 235.7L1129.6 234.1z" fill="#2d2f33" /><path d="M1129.8 236.1L1133.9 237.8L1134.9 252.2L1130.8 250.4z" fill="#2d2f33" /><path d="M1131.0 252.4L1135.1 254.2L1136.0 267.9L1132.0 266.0z" fill="#2d2f33" /><path d="M1132.1 268.1L1136.2 270.0L1137.1 282.3L1133.0 280.3z" fill="#2d2f33" /><path d="M1131.0 243.2L1133.7 244.3L1134.0 249.1L1131.3 248.0z" fill="#d8d8d8" /><path d="M1135.7 220.3L1139.9 221.8L1141.0 238.5L1136.8 236.9z" fill="#2d2f33" /><path d="M1136.9 238.9L1141.1 240.6L1142.0 255.2L1137.9 253.4z" fill="#2d2f33" /><path d="M1138.1 255.5L1142.2 257.3L1143.1 271.2L1139.0 269.3z" fill="#2d2f33" /><path d="M1139.1 271.4L1143.2 273.3L1144.0 285.9L1140.0 283.8z" fill="#2d2f33" /><path d="M1142.9 222.8L1147.1 224.3L1148.1 241.3L1144.0 239.7z" fill="#2d2f33" /><path d="M1144.1 241.8L1148.3 243.4L1149.1 258.3L1145.0 256.5z" fill="#2d2f33" /><path d="M1145.2 258.6L1149.3 260.4L1150.1 274.5L1146.0 272.6z" fill="#2d2f33" /><path d="M1146.2 274.7L1150.2 276.7L1151.0 289.4L1147.0 287.3z" fill="#2d2f33" /><path d="M1145.3 249.1L1148.0 250.2L1148.3 255.1L1145.6 254.0z" fill="#d8d8d8" /><path d="M1150.2 225.4L1154.4 226.8L1155.3 244.1L1151.2 242.5z" fill="#2d2f33" /><path d="M1151.3 244.6L1155.4 246.2L1156.3 261.3L1152.1 259.5z" fill="#2d2f33" /><path d="M1152.3 261.7L1156.4 263.5L1157.2 277.8L1153.1 275.9z" fill="#2d2f33" /><path d="M1153.2 278.1L1157.3 280.0L1158.0 292.9L1153.9 290.9z" fill="#2d2f33" /><path d="M1157.4 227.9L1161.6 229.4L1162.5 246.9L1158.3 245.2z" fill="#2d2f33" /><path d="M1158.4 247.4L1162.6 249.1L1163.4 264.4L1159.2 262.6z" fill="#2d2f33" /><path d="M1159.3 264.8L1163.5 266.5L1164.2 281.1L1160.1 279.2z" fill="#2d2f33" /><path d="M1160.2 281.4L1164.3 283.3L1164.9 296.4L1160.9 294.4z" fill="#2d2f33" /><path d="M1159.5 254.9L1162.2 256.0L1162.5 261.1L1159.8 260.0z" fill="#d8d8d8" /><path d="M1164.7 230.4L1168.9 231.9L1169.7 249.7L1165.5 248.0z" fill="#2d2f33" /><path d="M1165.6 250.2L1169.8 251.9L1170.5 267.4L1166.3 265.6z" fill="#2d2f33" /><path d="M1166.4 267.8L1170.6 269.6L1171.2 284.4L1167.1 282.5z" fill="#2d2f33" /><path d="M1167.2 284.7L1171.3 286.6L1171.9 300.0L1167.9 297.9z" fill="#2d2f33" /><path d="M1171.9 233.0L1176.1 234.4L1176.8 252.5L1172.7 250.8z" fill="#2d2f33" /><path d="M1172.8 253.1L1176.9 254.7L1177.6 270.5L1173.4 268.7z" fill="#2d2f33" /><path d="M1173.5 270.9L1177.6 272.7L1178.3 287.7L1174.2 285.8z" fill="#2d2f33" /><path d="M1174.3 288.0L1178.3 290.0L1178.9 303.5L1174.8 301.4z" fill="#2d2f33" /><path d="M1173.8 260.8L1176.5 261.9L1176.7 267.2L1174.0 266.0z" fill="#d8d8d8" /><path d="M1179.1 235.5L1183.4 237.0L1184.0 255.2L1179.8 253.6z" fill="#2d2f33" /><path d="M1179.9 255.9L1184.1 257.5L1184.7 273.5L1180.5 271.7z" fill="#2d2f33" /><path d="M1180.6 274.0L1184.7 275.8L1185.3 291.0L1181.2 289.1z" fill="#2d2f33" /><path d="M1181.3 291.4L1185.4 293.3L1185.9 307.0L1181.8 305.0z" fill="#2d2f33" /><path d="M1186.4 238.0L1190.6 239.5L1191.2 258.0L1187.0 256.4z" fill="#2d2f33" /><path d="M1187.1 258.7L1191.3 260.4L1191.8 276.6L1187.6 274.8z" fill="#2d2f33" /><path d="M1187.7 277.1L1191.8 278.9L1192.3 294.3L1188.2 292.4z" fill="#2d2f33" /><path d="M1188.3 294.7L1192.4 296.6L1192.8 310.5L1188.8 308.5z" fill="#2d2f33" /><path d="M1188.1 266.7L1190.8 267.8L1191.0 273.2L1188.2 272.0z" fill="#d8d8d8" /><path d="M1193.6 240.6L1197.8 242.0L1198.4 260.8L1194.2 259.2z" fill="#2d2f33" /><path d="M1194.3 261.5L1198.4 263.2L1198.9 279.6L1194.7 277.8z" fill="#2d2f33" /><path d="M1194.8 280.2L1198.9 282.0L1199.4 297.6L1195.3 295.7z" fill="#2d2f33" /><path d="M1195.3 298.0L1199.4 300.0L1199.8 314.1L1195.8 312.0z" fill="#2d2f33" /><path d="M1200.9 243.1L1205.1 244.6L1205.5 263.6L1201.4 262.0z" fill="#2d2f33" /><path d="M1201.4 264.4L1205.6 266.0L1206.0 282.7L1201.8 280.9z" fill="#2d2f33" /><path d="M1201.9 283.3L1206.0 285.0L1206.4 300.9L1202.3 299.0z" fill="#2d2f33" /><path d="M1202.4 301.4L1206.4 303.3L1206.8 317.6L1202.7 315.5z" fill="#2d2f33" /><path d="M1202.3 272.5L1205.1 273.6L1205.2 279.2L1202.5 278.0z" fill="#d8d8d8" /><path d="M1208.1 245.6L1212.3 247.1L1212.7 266.4L1208.5 264.8z" fill="#2d2f33" /><path d="M1208.6 267.2L1212.7 268.8L1213.1 285.7L1208.9 283.9z" fill="#2d2f33" /><path d="M1209.0 286.3L1213.1 288.1L1213.4 304.2L1209.3 302.3z" fill="#2d2f33" /><path d="M1209.4 304.7L1213.5 306.6L1213.7 321.1L1209.7 319.1z" fill="#2d2f33" /><path d="M1215.4 248.2L1219.6 249.7L1219.9 269.2L1215.7 267.6z" fill="#2d2f33" /><path d="M1215.8 270.0L1219.9 271.7L1220.2 288.8L1216.1 287.0z" fill="#2d2f33" /><path d="M1216.1 289.4L1220.2 291.2L1220.5 307.5L1216.4 305.6z" fill="#2d2f33" /><path d="M1216.4 308.0L1220.5 310.0L1220.7 324.6L1216.7 322.6z" fill="#2d2f33" /><path d="M1216.6 278.4L1219.3 279.5L1219.4 285.2L1216.7 284.1z" fill="#d8d8d8" /><path d="M1222.6 250.7L1226.8 252.2L1227.0 272.0L1222.9 270.4z" fill="#2d2f33" /><path d="M1222.9 272.8L1227.1 274.5L1227.3 291.8L1223.2 290.0z" fill="#2d2f33" /><path d="M1223.2 292.5L1227.3 294.3L1227.5 310.8L1223.4 308.9z" fill="#2d2f33" /><path d="M1223.4 311.4L1227.5 313.3L1227.7 328.1L1223.6 326.1z" fill="#2d2f33" /><path d="M1229.9 253.3L1234.1 254.7L1234.2 274.8L1230.1 273.2z" fill="#2d2f33" /><path d="M1230.1 275.7L1234.2 277.3L1234.4 294.9L1230.3 293.1z" fill="#2d2f33" /><path d="M1230.3 295.6L1234.4 297.4L1234.5 314.1L1230.4 312.2z" fill="#2d2f33" /><path d="M1230.5 314.7L1234.5 316.6L1234.7 331.7L1230.6 329.6z" fill="#2d2f33" /><path d="M1230.9 284.3L1233.6 285.4L1233.6 291.2L1230.9 290.1z" fill="#d8d8d8" /><path d="M1237.1 255.8L1241.3 257.3L1241.4 277.6L1237.2 276.0z" fill="#2d2f33" /><path d="M1237.2 278.5L1241.4 280.1L1241.5 297.9L1237.4 296.1z" fill="#2d2f33" /><path d="M1237.4 298.7L1241.5 300.5L1241.6 317.4L1237.5 315.5z" fill="#2d2f33" /><path d="M1237.5 318.0L1241.6 319.9L1241.6 335.2L1237.6 333.1z" fill="#2d2f33" /><path d="M1244.3 258.3L1248.6 259.8L1248.6 280.4L1244.4 278.8z" fill="#2d2f33" /><path d="M1244.4 281.3L1248.6 283.0L1248.6 301.0L1244.5 299.2z" fill="#2d2f33" /><path d="M1244.5 301.8L1248.6 303.5L1248.6 320.7L1244.5 318.8z" fill="#2d2f33" /><path d="M1244.5 321.3L1248.6 323.3L1248.6 338.7L1244.6 336.7z" fill="#2d2f33" /><path d="M1245.1 290.1L1247.9 291.2L1247.9 297.2L1245.2 296.1z" fill="#d8d8d8" /><path d="M1250 256L1279 250L1279 212L1392 166L1399 181L1399 232L1250 342z" fill="#e07a50" stroke="#5b2a18" stroke-width="0.8"/><path d="M1281.3 219.7L1289.2 216.2L1289.2 245.6L1281.3 249.7z" fill="#2e3034" /><path d="M1281.3 256.1L1289.2 251.9L1289.2 279.1L1281.3 284.0z" fill="#2e3034" /><path d="M1281.3 290.5L1289.2 285.4L1289.2 305.3L1281.3 310.9z" fill="#2e3034" /><path d="M1292.0 215.0L1299.9 211.6L1299.9 240.0L1292.0 244.1z" fill="#2e3034" /><path d="M1292.0 250.3L1299.9 246.1L1299.9 272.4L1292.0 277.3z" fill="#2e3034" /><path d="M1292.0 283.6L1299.9 278.5L1299.9 297.7L1292.0 303.3z" fill="#2e3034" /><path d="M1302.7 210.4L1310.6 207.0L1310.6 234.4L1302.7 238.5z" fill="#2e3034" /><path d="M1302.7 244.5L1310.6 240.2L1310.6 265.7L1302.7 270.6z" fill="#2e3034" /><path d="M1302.7 276.7L1310.6 271.6L1310.6 290.2L1302.7 295.7z" fill="#2e3034" /><path d="M1315.3 201.1L1317.8 200.0L1317.8 228.7L1315.3 230.0z" fill="#34373c" /><path d="M1315.3 232.9L1317.8 231.6L1317.8 257.4L1315.3 258.9z" fill="#34373c" /><path d="M1315.3 261.8L1317.8 260.3L1317.8 282.3L1315.3 284.0z" fill="#34373c" /><path d="M1320.5 198.9L1323.0 197.9L1323.0 226.1L1320.5 227.3z" fill="#34373c" /><path d="M1320.5 230.2L1323.0 228.9L1323.0 254.3L1320.5 255.7z" fill="#34373c" /><path d="M1320.5 258.6L1323.0 257.1L1323.0 278.7L1320.5 280.4z" fill="#34373c" /><path d="M1325.7 196.7L1328.2 195.7L1328.2 223.4L1325.7 224.6z" fill="#34373c" /><path d="M1325.7 227.4L1328.2 226.1L1328.2 251.1L1325.7 252.6z" fill="#34373c" /><path d="M1325.7 255.4L1328.2 253.8L1328.2 275.1L1325.7 276.8z" fill="#34373c" /><path d="M1330.9 194.5L1333.4 193.5L1333.4 220.7L1330.9 222.0z" fill="#34373c" /><path d="M1330.9 224.7L1333.4 223.4L1333.4 247.9L1330.9 249.4z" fill="#34373c" /><path d="M1330.9 252.1L1333.4 250.6L1333.4 271.5L1330.9 273.2z" fill="#34373c" /><path d="M1336.1 192.3L1338.6 191.3L1338.6 218.0L1336.1 219.3z" fill="#34373c" /><path d="M1336.1 222.0L1338.6 220.7L1338.6 244.7L1336.1 246.2z" fill="#34373c" /><path d="M1336.1 248.9L1338.6 247.4L1338.6 267.9L1336.1 269.6z" fill="#34373c" /><path d="M1341.3 190.2L1343.8 189.1L1343.8 215.3L1341.3 216.6z" fill="#34373c" /><path d="M1341.3 219.2L1343.8 218.0L1343.8 241.6L1341.3 243.0z" fill="#34373c" /><path d="M1341.3 245.7L1343.8 244.2L1343.8 264.3L1341.3 266.0z" fill="#34373c" /><path d="M1346.5 188.0L1349.0 186.9L1349.0 212.7L1346.5 213.9z" fill="#34373c" /><path d="M1346.5 216.5L1349.0 215.2L1349.0 238.4L1346.5 239.9z" fill="#34373c" /><path d="M1346.5 242.5L1349.0 240.9L1349.0 260.7L1346.5 262.4z" fill="#34373c" /><path d="M1351.7 185.8L1354.2 184.8L1354.2 210.0L1351.7 211.2z" fill="#34373c" /><path d="M1351.7 213.8L1354.2 212.5L1354.2 235.2L1351.7 236.7z" fill="#34373c" /><path d="M1351.7 239.2L1354.2 237.7L1354.2 257.1L1351.7 258.7z" fill="#34373c" /><path d="M1356.9 183.6L1359.4 182.6L1359.4 207.3L1356.9 208.6z" fill="#34373c" /><path d="M1356.9 211.1L1359.4 209.8L1359.4 232.0L1356.9 233.5z" fill="#34373c" /><path d="M1356.9 236.0L1359.4 234.5L1359.4 253.4L1356.9 255.1z" fill="#34373c" /><path d="M1362.1 181.4L1364.6 180.4L1364.6 204.6L1362.1 205.9z" fill="#34373c" /><path d="M1362.1 208.3L1364.6 207.0L1364.6 228.8L1362.1 230.3z" fill="#34373c" /><path d="M1362.1 232.8L1364.6 231.3L1364.6 249.8L1362.1 251.5z" fill="#34373c" /><path d="M1367.3 179.2L1369.8 178.2L1369.8 201.9L1367.3 203.2z" fill="#34373c" /><path d="M1367.3 205.6L1369.8 204.3L1369.8 225.7L1367.3 227.2z" fill="#34373c" /><path d="M1367.3 229.6L1369.8 228.0L1369.8 246.2L1367.3 247.9z" fill="#34373c" /><path d="M1372.5 177.1L1375.0 176.0L1375.0 199.3L1372.5 200.5z" fill="#34373c" /><path d="M1372.5 202.9L1375.0 201.6L1375.0 222.5L1372.5 224.0z" fill="#34373c" /><path d="M1372.5 226.3L1375.0 224.8L1375.0 242.6L1372.5 244.3z" fill="#34373c" /><path d="M1377.7 174.9L1380.1 173.9L1380.1 196.6L1377.7 197.8z" fill="#34373c" /><path d="M1377.7 200.1L1380.1 198.9L1380.1 219.3L1377.7 220.8z" fill="#34373c" /><path d="M1377.7 223.1L1380.1 221.6L1380.1 239.0L1377.7 240.7z" fill="#34373c" /><path d="M1382.9 172.7L1385.3 171.7L1385.3 193.9L1382.9 195.2z" fill="#34373c" /><path d="M1382.9 197.4L1385.3 196.1L1385.3 216.1L1382.9 217.6z" fill="#34373c" /><path d="M1382.9 219.9L1385.3 218.4L1385.3 235.4L1382.9 237.1z" fill="#34373c" /><path d="M1388.1 170.5L1390.5 169.5L1390.5 191.2L1388.1 192.5z" fill="#34373c" /><path d="M1388.1 194.7L1390.5 193.4L1390.5 213.0L1388.1 214.5z" fill="#34373c" /><path d="M1388.1 216.7L1390.5 215.1L1390.5 231.8L1388.1 233.5z" fill="#34373c" /><path d="M1255.8 265.9L1263.0 263.6L1263.0 285.1L1255.8 288.5z" fill="#2d2f33" /><path d="M1267.4 262.2L1274.7 259.8L1274.7 279.6L1267.4 283.0z" fill="#2d2f33" /><path d="M1255.8 299.8L1263.0 295.8L1263.0 317.3L1255.8 322.3z" fill="#2d2f33" /><path d="M1267.4 293.5L1274.7 289.6L1274.7 309.4L1267.4 314.4z" fill="#2d2f33" /><path d="M1195 193L1279 212L1279 250L1195 229z" fill="#e07a50" stroke="#5b2a18" stroke-width="0.8"/><path d="M1195 202L1279 221" stroke="#5b2a18" stroke-width="0.7"/><path d="M1053 189L1226 155L1300 164L1195 193L1195 229L1262 250L1250 256z" fill="#e58056" stroke="#5b2a18" stroke-width="0.8"/><path d="M1061 193L1192 167L1195 193L1195 229L1258 248L1248 252z" fill="#b5b7d8"/><path d="M1117 210.7L1195 195.2" stroke="#9a4a3a" stroke-width="0.8" stroke-dasharray="1 1.3"/><path d="M1164 225.5L1195 219.3" stroke="#9a4a3a" stroke-width="0.8" stroke-dasharray="1 1.3"/><path d="M1090 202L1195 181.2" stroke="#9a4a3a" stroke-width="0.8" stroke-dasharray="1 1.3"/><path d="M1106.9 183.9L1195 211.7" stroke="#9a4a3a" stroke-width="0.8" stroke-dasharray="1 1.3"/><path d="M1152.7 174.8L1195 188.1" stroke="#9a4a3a" stroke-width="0.8" stroke-dasharray="1 1.3"/><path d="M1085 188.5L1195 223.2" stroke="#9a4a3a" stroke-width="0.8" stroke-dasharray="1 1.3"/><ellipse cx="1125" cy="205" rx="1.5" ry="0.9" fill="#6a6a6a"/><ellipse cx="1140" cy="202" rx="1.5" ry="0.9" fill="#6a6a6a"/><ellipse cx="1158" cy="198" rx="1.5" ry="0.9" fill="#6a6a6a"/><ellipse cx="1150" cy="214" rx="1.5" ry="0.9" fill="#6a6a6a"/><ellipse cx="1168" cy="211" rx="1.5" ry="0.9" fill="#6a6a6a"/><ellipse cx="1183" cy="208" rx="1.5" ry="0.9" fill="#6a6a6a"/><ellipse cx="1178" cy="222" rx="1.5" ry="0.9" fill="#6a6a6a"/><ellipse cx="1190" cy="218" rx="1.5" ry="0.9" fill="#6a6a6a"/><path d="M1111 196L1160 184" stroke="#222" stroke-width="1.4"/><path d="M1192 167L1226 158L1300 166L1255 184L1195 193z" fill="#a3a4c2"/><path d="M1228 178L1297 167L1298 172L1229 184z" fill="#505258"/><path d="M1229 181L1297 169.5" stroke="#eeeeee" stroke-width="5" stroke-dasharray="1.8 2.6"/><path d="M1193 161L1212 158L1231 163L1231 185L1212 182L1193 186z" fill="#e07a50" stroke="#5b2a18" stroke-width="0.7"/><path d="M1212 158L1212 182" stroke="#5b2a18" stroke-width="0.7"/><path d="M1216 166L1222 167L1222 180L1216 179z" fill="#3a3030"/><path d="M1161 188L1195 195L1195 202L1161 195z" fill="#f3f1d6"/><path d="M1175 186L1195 181L1196 190L1176 194z" fill="#3c3e42"/><path d="M1176 190L1195 185.5" stroke="#ddd" stroke-width="6" stroke-dasharray="1.2 2.5"/><path d="M1195 193L1300 164L1323 158L1392 166L1279 212z" fill="#e58056" stroke="#5b2a18" stroke-width="0.8"/><path d="M1206 194L1256 185L1316 170L1325 163L1380 168L1279 209z" fill="#b5b7d8"/><path d="M1257 197v9" stroke="#888" stroke-width="1.2"/><path d="M1057 211L1250 291L1279 279L1397 201" fill="none" stroke="#ececec" stroke-width="2.3"/><path d="M1057 227L1250 314L1279 301L1397 217" fill="none" stroke="#dcdcdc" stroke-width="2.1"/><path d="M1322 292L1345 279L1347 285L1324 298z" fill="#3a3a3a" stroke="#ccc" stroke-width="0.8"/></g></svg>
<div class="a" style="left:669px;top:424px;width:1148px;height:387px;background:#555555;border-radius:6px 6px 5px 5px;overflow:hidden">
<div class="a" style="left:0px;top:37px;width:64px;height:31px;background:#fff;"></div><div class="a" style="left:64px;top:37px;width:1084px;height:31px;background:#676767;"></div><div class="a" style="left:154px;top:37px;width:1px;height:31px;background:#585858;"></div><div class="a" style="left:440px;top:37px;width:1px;height:31px;background:#585858;"></div><div class="a" style="left:632px;top:37px;width:1px;height:31px;background:#585858;"></div><div class="a" style="left:932px;top:37px;width:1px;height:31px;background:#585858;"></div><div class="a" style="left:1140px;top:37px;width:8px;height:342px;background:#676767;"></div><div class="a" style="left:1140px;top:37px;width:8px;height:8px;background:#3c96b5;"></div><div class="a" style="left:0px;top:68px;width:1140px;height:311px;background:#fff;"></div><div class="a" style="left:0px;top:100px;width:1140px;height:1px;background:#dedede;"></div><div class="a" style="left:20.5px;top:77.30000000000001px;width:15px;height:15px;border:2px solid #6e6e6e;border-radius:3px;background:transparent"></div><svg style="left:80px;top:82.5px" width="10" height="6" viewBox="0 0 10 6"><path d="M0 0h9.6l-4.8 5.2z" fill="#777"/></svg><div class="t" style="left:97.39999999999998px;top:75.76px;font-size:14.1px;color:#1e1e1e;font-weight:normal;letter-spacing:0px">Неотсортированные</div><div class="a" style="left:0px;top:101px;width:1140px;height:31px;background:#efefef;"></div><div class="a" style="left:0px;top:132px;width:1140px;height:1px;background:#dedede;"></div><div class="a" style="left:64px;top:101px;width:1.4px;height:31px;background:#555;"></div><div class="a" style="left:154px;top:101px;width:1.4px;height:31px;background:#555;"></div><div class="a" style="left:440px;top:101px;width:1.4px;height:31px;background:#555;"></div><div class="a" style="left:632px;top:101px;width:1.4px;height:31px;background:#555;"></div><div class="a" style="left:932px;top:101px;width:1.4px;height:31px;background:#555;"></div><div class="a" style="left:20.5px;top:109.5px;width:15px;height:15px;border:2px solid #6e6e6e;border-radius:3px;background:transparent"></div><div class="t" style="left:81px;top:108.66px;font-size:14.1px;color:#1e1e1e;font-weight:normal;letter-spacing:0.07px">новая</div><div class="clip" style="left:170.70000000000005px;top:108.66px;width:269.29999999999995px;height:18.3px;font-size:14.1px;line-height:1;color:#1e1e1e;font-weight:normal;letter-spacing:-0.17px">Базовая стена:ADSK_Внутренняя_Кирпичная</div><div class="clip" style="left:456.5999999999999px;top:108.66px;width:175.4000000000001px;height:18.3px;font-size:14.1px;line-height:1;color:#1e1e1e;font-weight:normal;letter-spacing:-0.34px">Соединение_Контур_Американка</div><div class="clip" style="left:648.5px;top:108.66px;width:283.5px;height:18.3px;font-size:14.1px;line-height:1;color:#1e1e1e;font-weight:normal;letter-spacing:-0.033px">0Jso4l43j6aes62W8KNlvk</div><div class="clip" style="left:948.5999999999999px;top:108.66px;width:191.4000000000001px;height:18.3px;font-size:14.1px;line-height:1;color:#1e1e1e;font-weight:normal;letter-spacing:-0.107px">2NlZU5tEHBohn4h3fK91mi</div><div class="a" style="left:0px;top:133px;width:1140px;height:31px;background:#ffffff;"></div><div class="a" style="left:0px;top:164px;width:1140px;height:1px;background:#dedede;"></div><div class="a" style="left:64px;top:133px;width:1.4px;height:31px;background:#555;"></div><div class="a" style="left:154px;top:133px;width:1.4px;height:31px;background:#555;"></div><div class="a" style="left:440px;top:133px;width:1.4px;height:31px;background:#555;"></div><div class="a" style="left:632px;top:133px;width:1.4px;height:31px;background:#555;"></div><div class="a" style="left:932px;top:133px;width:1.4px;height:31px;background:#555;"></div><div class="a" style="left:20.5px;top:141.5px;width:15px;height:15px;border:2px solid #6e6e6e;border-radius:3px;background:transparent"></div><div class="t" style="left:81px;top:140.66px;font-size:14.1px;color:#1e1e1e;font-weight:normal;letter-spacing:0.07px">новая</div><div class="clip" style="left:170.70000000000005px;top:140.66px;width:269.29999999999995px;height:18.3px;font-size:14.1px;line-height:1;color:#1e1e1e;font-weight:normal;letter-spacing:-0.17px">Базовая стена:ADSK_Внутренняя_Кирпичная</div><div class="clip" style="left:456.5999999999999px;top:140.66px;width:175.4000000000001px;height:18.3px;font-size:14.1px;line-height:1;color:#1e1e1e;font-weight:normal;letter-spacing:-0.34px">Соединение_Контур_Американка</div><div class="clip" style="left:648.5px;top:140.66px;width:283.5px;height:18.3px;font-size:14.1px;line-height:1;color:#1e1e1e;font-weight:normal;letter-spacing:-0.033px">0Jso4l43j6aes62W8KNlvk</div><div class="clip" style="left:948.5999999999999px;top:140.66px;width:191.4000000000001px;height:18.3px;font-size:14.1px;line-height:1;color:#1e1e1e;font-weight:normal;letter-spacing:-0.334px">31ob8Efnb4EwYdQOXe2T6J</div><div class="a" style="left:0px;top:165px;width:1140px;height:31px;background:#efefef;"></div><div class="a" style="left:0px;top:196px;width:1140px;height:1px;background:#dedede;"></div><div class="a" style="left:64px;top:165px;width:1.4px;height:31px;background:#555;"></div><div class="a" style="left:154px;top:165px;width:1.4px;height:31px;background:#555;"></div><div class="a" style="left:440px;top:165px;width:1.4px;height:31px;background:#555;"></div><div class="a" style="left:632px;top:165px;width:1.4px;height:31px;background:#555;"></div><div class="a" style="left:932px;top:165px;width:1.4px;height:31px;background:#555;"></div><div class="a" style="left:20.5px;top:173.5px;width:15px;height:15px;border:2px solid #6e6e6e;border-radius:3px;background:transparent"></div><div class="t" style="left:81px;top:172.66px;font-size:14.1px;color:#1e1e1e;font-weight:normal;letter-spacing:0.07px">новая</div><div class="clip" style="left:170.70000000000005px;top:172.66px;width:269.29999999999995px;height:18.3px;font-size:14.1px;line-height:1;color:#1e1e1e;font-weight:normal;letter-spacing:-0.17px">Базовая стена:ADSK_Внутренняя_Кирпичная</div><div class="clip" style="left:456.5999999999999px;top:172.66px;width:175.4000000000001px;height:18.3px;font-size:14.1px;line-height:1;color:#1e1e1e;font-weight:normal;letter-spacing:-0.43px">ADSK_ФасоннаяЧасть_ПП_Отвод</div><div class="clip" style="left:648.5px;top:172.66px;width:283.5px;height:18.3px;font-size:14.1px;line-height:1;color:#1e1e1e;font-weight:normal;letter-spacing:-0.033px">0Jso4l43j6aes62W8KNlvk</div><div class="clip" style="left:948.5999999999999px;top:172.66px;width:191.4000000000001px;height:18.3px;font-size:14.1px;line-height:1;color:#1e1e1e;font-weight:normal;letter-spacing:-0.299px">0i3W$40lrChAvuU$z2_ZUz</div><div class="a" style="left:0px;top:197px;width:1140px;height:31px;background:#ffffff;"></div><div class="a" style="left:0px;top:228px;width:1140px;height:1px;background:#dedede;"></div><div class="a" style="left:64px;top:197px;width:1.4px;height:31px;background:#555;"></div><div class="a" style="left:154px;top:197px;width:1.4px;height:31px;background:#555;"></div><div class="a" style="left:440px;top:197px;width:1.4px;height:31px;background:#555;"></div><div class="a" style="left:632px;top:197px;width:1.4px;height:31px;background:#555;"></div><div class="a" style="left:932px;top:197px;width:1.4px;height:31px;background:#555;"></div><div class="a" style="left:20.5px;top:205.5px;width:15px;height:15px;border:2px solid #6e6e6e;border-radius:3px;background:transparent"></div><div class="t" style="left:81px;top:204.66px;font-size:14.1px;color:#1e1e1e;font-weight:normal;letter-spacing:0.07px">новая</div><div class="clip" style="left:170.70000000000005px;top:204.66px;width:269.29999999999995px;height:18.3px;font-size:14.1px;line-height:1;color:#1e1e1e;font-weight:normal;letter-spacing:-0.17px">Базовая стена:ADSK_Внутренняя_Кирпичная</div><div class="clip" style="left:456.5999999999999px;top:204.66px;width:175.4000000000001px;height:18.3px;font-size:14.1px;line-height:1;color:#1e1e1e;font-weight:normal;letter-spacing:-0.34px">Соединение_Контур_Американка</div><div class="clip" style="left:648.5px;top:204.66px;width:283.5px;height:18.3px;font-size:14.1px;line-height:1;color:#1e1e1e;font-weight:normal;letter-spacing:-0.033px">0Jso4l43j6aes62W8KNlvk</div><div class="clip" style="left:948.5999999999999px;top:204.66px;width:191.4000000000001px;height:18.3px;font-size:14.1px;line-height:1;color:#1e1e1e;font-weight:normal;letter-spacing:-0.377px">1oAOBNf0HExvIE7eVBWbN3</div><div class="a" style="left:0px;top:229px;width:1140px;height:31px;background:#efefef;"></div><div class="a" style="left:0px;top:260px;width:1140px;height:1px;background:#dedede;"></div><div class="a" style="left:64px;top:229px;width:1.4px;height:31px;background:#555;"></div><div class="a" style="left:154px;top:229px;width:1.4px;height:31px;background:#555;"></div><div class="a" style="left:440px;top:229px;width:1.4px;height:31px;background:#555;"></div><div class="a" style="left:632px;top:229px;width:1.4px;height:31px;background:#555;"></div><div class="a" style="left:932px;top:229px;width:1.4px;height:31px;background:#555;"></div><div class="a" style="left:20.5px;top:237.5px;width:15px;height:15px;border:2px solid #6e6e6e;border-radius:3px;background:transparent"></div><div class="t" style="left:81px;top:236.66px;font-size:14.1px;color:#1e1e1e;font-weight:normal;letter-spacing:0.07px">новая</div><div class="clip" style="left:170.70000000000005px;top:236.66px;width:269.29999999999995px;height:18.3px;font-size:14.1px;line-height:1;color:#1e1e1e;font-weight:normal;letter-spacing:-0.17px">Базовая стена:ADSK_Внутренняя_Кирпичная</div><div class="clip" style="left:456.5999999999999px;top:236.66px;width:175.4000000000001px;height:18.3px;font-size:14.1px;line-height:1;color:#1e1e1e;font-weight:normal;letter-spacing:-0.34px">Соединение_Контур_Американка</div><div class="clip" style="left:648.5px;top:236.66px;width:283.5px;height:18.3px;font-size:14.1px;line-height:1;color:#1e1e1e;font-weight:normal;letter-spacing:-0.033px">0Jso4l43j6aes62W8KNlvk</div><div class="clip" style="left:948.5999999999999px;top:236.66px;width:191.4000000000001px;height:18.3px;font-size:14.1px;line-height:1;color:#1e1e1e;font-weight:normal;letter-spacing:-0.391px">31ob8Efnb4EwYdQOXe2T3W</div><div class="a" style="left:0px;top:261px;width:1140px;height:31px;background:#ffffff;"></div><div class="a" style="left:0px;top:292px;width:1140px;height:1px;background:#dedede;"></div><div class="a" style="left:64px;top:261px;width:1.4px;height:31px;background:#555;"></div><div class="a" style="left:154px;top:261px;width:1.4px;height:31px;background:#555;"></div><div class="a" style="left:440px;top:261px;width:1.4px;height:31px;background:#555;"></div><div class="a" style="left:632px;top:261px;width:1.4px;height:31px;background:#555;"></div><div class="a" style="left:932px;top:261px;width:1.4px;height:31px;background:#555;"></div><div class="a" style="left:20.5px;top:269.5px;width:15px;height:15px;border:2px solid #6e6e6e;border-radius:3px;background:transparent"></div><div class="t" style="left:81px;top:268.66px;font-size:14.1px;color:#1e1e1e;font-weight:normal;letter-spacing:0.07px">новая</div><div class="clip" style="left:170.70000000000005px;top:268.66px;width:269.29999999999995px;height:18.3px;font-size:14.1px;line-height:1;color:#1e1e1e;font-weight:normal;letter-spacing:-0.17px">Базовая стена:ADSK_Внутренняя_Кирпичная</div><div class="clip" style="left:456.5999999999999px;top:268.66px;width:175.4000000000001px;height:18.3px;font-size:14.1px;line-height:1;color:#1e1e1e;font-weight:normal;letter-spacing:-0.03px">Кран_шаровой_латунный_муфтовый</div><div class="clip" style="left:648.5px;top:268.66px;width:283.5px;height:18.3px;font-size:14.1px;line-height:1;color:#1e1e1e;font-weight:normal;letter-spacing:-0.033px">0Jso4l43j6aes62W8KNlvk</div><div class="clip" style="left:948.5999999999999px;top:268.66px;width:191.4000000000001px;height:18.3px;font-size:14.1px;line-height:1;color:#1e1e1e;font-weight:normal;letter-spacing:-0.377px">31ob8Efnb4EwYdQOXe2T0V</div><div class="a" style="left:0px;top:293px;width:1140px;height:31px;background:#efefef;"></div><div class="a" style="left:0px;top:324px;width:1140px;height:1px;background:#dedede;"></div><div class="a" style="left:64px;top:293px;width:1.4px;height:31px;background:#555;"></div><div class="a" style="left:154px;top:293px;width:1.4px;height:31px;background:#555;"></div><div class="a" style="left:440px;top:293px;width:1.4px;height:31px;background:#555;"></div><div class="a" style="left:632px;top:293px;width:1.4px;height:31px;background:#555;"></div><div class="a" style="left:932px;top:293px;width:1.4px;height:31px;background:#555;"></div><div class="a" style="left:20.5px;top:301.5px;width:15px;height:15px;border:2px solid #6e6e6e;border-radius:3px;background:transparent"></div><div class="t" style="left:81px;top:300.66px;font-size:14.1px;color:#1e1e1e;font-weight:normal;letter-spacing:0.07px">новая</div><div class="clip" style="left:170.70000000000005px;top:300.66px;width:269.29999999999995px;height:18.3px;font-size:14.1px;line-height:1;color:#1e1e1e;font-weight:normal;letter-spacing:-0.2px">Дверь_Деревянная_Внутренняя_Однопольная</div><div class="clip" style="left:456.5999999999999px;top:300.66px;width:175.4000000000001px;height:18.3px;font-size:14.1px;line-height:1;color:#1e1e1e;font-weight:normal;letter-spacing:-0.1px">Типы трубопроводов:ADSK_Сталь</div><div class="clip" style="left:648.5px;top:300.66px;width:283.5px;height:18.3px;font-size:14.1px;line-height:1;color:#1e1e1e;font-weight:normal;letter-spacing:-0.231px">2npfzAa$DEgfXU9g3q1VcG</div><div class="clip" style="left:948.5999999999999px;top:300.66px;width:191.4000000000001px;height:18.3px;font-size:14.1px;line-height:1;color:#1e1e1e;font-weight:normal;letter-spacing:-0.301px">1VuFvPg318XxUGXdYfA97u</div><div class="a" style="left:0px;top:325px;width:1140px;height:31px;background:#ffffff;"></div><div class="a" style="left:0px;top:356px;width:1140px;height:1px;background:#dedede;"></div><div class="a" style="left:64px;top:325px;width:1.4px;height:31px;background:#555;"></div><div class="a" style="left:154px;top:325px;width:1.4px;height:31px;background:#555;"></div><div class="a" style="left:440px;top:325px;width:1.4px;height:31px;background:#555;"></div><div class="a" style="left:632px;top:325px;width:1.4px;height:31px;background:#555;"></div><div class="a" style="left:932px;top:325px;width:1.4px;height:31px;background:#555;"></div><div class="a" style="left:20.5px;top:333.5px;width:15px;height:15px;border:2px solid #6e6e6e;border-radius:3px;background:transparent"></div><div class="t" style="left:81px;top:332.66px;font-size:14.1px;color:#1e1e1e;font-weight:normal;letter-spacing:0.07px">новая</div><div class="clip" style="left:170.70000000000005px;top:332.66px;width:269.29999999999995px;height:18.3px;font-size:14.1px;line-height:1;color:#1e1e1e;font-weight:normal;letter-spacing:-0.17px">Базовая стена:ADSK_Внутренняя_Кирпичная</div><div class="clip" style="left:456.5999999999999px;top:332.66px;width:175.4000000000001px;height:18.3px;font-size:14.1px;line-height:1;color:#1e1e1e;font-weight:normal;letter-spacing:-0.43px">ADSK_ФасоннаяЧасть_ПП_Отвод</div><div class="clip" style="left:648.5px;top:332.66px;width:283.5px;height:18.3px;font-size:14.1px;line-height:1;color:#1e1e1e;font-weight:normal;letter-spacing:-0.033px">0Jso4l43j6aes62W8KNlvk</div><div class="clip" style="left:948.5999999999999px;top:332.66px;width:191.4000000000001px;height:18.3px;font-size:14.1px;line-height:1;color:#1e1e1e;font-weight:normal;letter-spacing:-0.252px">0i3W$40lrChAvuU$z2_ZUt</div><div class="a" style="left:0px;top:357px;width:1140px;height:31px;background:#efefef;"></div><div class="a" style="left:0px;top:388px;width:1140px;height:1px;background:#dedede;"></div><div class="a" style="left:64px;top:357px;width:1.4px;height:31px;background:#555;"></div><div class="a" style="left:154px;top:357px;width:1.4px;height:31px;background:#555;"></div><div class="a" style="left:440px;top:357px;width:1.4px;height:31px;background:#555;"></div><div class="a" style="left:632px;top:357px;width:1.4px;height:31px;background:#555;"></div><div class="a" style="left:932px;top:357px;width:1.4px;height:31px;background:#555;"></div><div class="a" style="left:20.5px;top:365.5px;width:15px;height:15px;border:2px solid #6e6e6e;border-radius:3px;background:transparent"></div><div class="t" style="left:81px;top:364.66px;font-size:14.1px;color:#1e1e1e;font-weight:normal;letter-spacing:0.07px">новая</div><div class="clip" style="left:170.70000000000005px;top:364.66px;width:269.29999999999995px;height:18.3px;font-size:14.1px;line-height:1;color:#1e1e1e;font-weight:normal;letter-spacing:-0.17px">Базовая стена:ADSK_Внутренняя_Кирпичная</div><div class="clip" style="left:456.5999999999999px;top:364.66px;width:175.4000000000001px;height:18.3px;font-size:14.1px;line-height:1;color:#1e1e1e;font-weight:normal;letter-spacing:-0.26px">ADSK_ФитингСварнойПП_(Тройник)</div><div class="clip" style="left:648.5px;top:364.66px;width:283.5px;height:18.3px;font-size:14.1px;line-height:1;color:#1e1e1e;font-weight:normal;letter-spacing:-0.168px">0iFRmpnlr9IuSMyqh5AIx1</div><div class="clip" style="left:948.5999999999999px;top:364.66px;width:191.4000000000001px;height:18.3px;font-size:14.1px;line-height:1;color:#1e1e1e;font-weight:normal;letter-spacing:-0.311px">1DEV$G9kDCcAdTDiIzmMlA</div><div class="a" style="left:18.600000000000023px;top:45.19999999999999px;width:15px;height:15px;border:2px solid #3c96b5;border-radius:3px;background:#fff"></div><div class="t" style="left:81px;top:47.24px;font-size:12px;color:#ededed;font-weight:bold;letter-spacing:-0.35px">Статус</div><div class="t" style="left:170.70000000000005px;top:47.24px;font-size:12px;color:#ededed;font-weight:bold;letter-spacing:-0.26px">Элемент (Модель A)</div><div class="t" style="left:456.5999999999999px;top:47.24px;font-size:12px;color:#ededed;font-weight:bold;letter-spacing:-0.26px">Элемент (Модель B)</div><div class="t" style="left:648.5px;top:47.24px;font-size:12px;color:#ededed;font-weight:bold;letter-spacing:-0.3px">GUID элемента (Модель A)</div><div class="t" style="left:948.5999999999999px;top:47.24px;font-size:12px;color:#ededed;font-weight:bold;letter-spacing:-0.3px">GUID элемента (Модель B)</div><div class="a" style="left:0px;top:379px;width:1148px;height:8px;background:#676767;"></div><div class="a" style="left:0px;top:379px;width:830px;height:8px;background:#3c96b5;"></div>
</div>
<div class="a" style="left:1243px;top:430px;width:42px;height:3px;background:#3c96b5;"></div>
<svg style="left:683px;top:438px;" width="17" height="15" viewBox="0 0 17 15"><g fill="#e0e0e0"><rect x="0" y="0.5" width="13.5" height="1.8"/><rect x="0" y="4.5" width="13.5" height="1.8"/><rect x="0" y="8.5" width="11" height="1.8"/><path d="M12 9.5l4.5 2.7l-4.5 2.7z"/></g></svg>
<div class="t" style="left:713.4px;top:437.70px;font-size:14.3px;color:#e6e6e6;font-weight:normal;letter-spacing:0px;">Коллизии (количество: 1714)</div>
<svg style="left:1642px;top:430px;" width="28" height="28" viewBox="0 0 28 28"><g fill="none" stroke="#e0e0e0" stroke-width="1.8">
<path d="M16.7 13V15a1.5 1.5 0 0 1-1.5 1.5H7.5a1.5 1.5 0 0 1-1.5-1.5V7.7a1.5 1.5 0 0 1 1.5-1.5H15.2a1.5 1.5 0 0 1 1.5 1.5"/>
<path d="M11 13.8V12.7a1.5 1.5 0 0 1 1.5-1.5H20a1.5 1.5 0 0 1 1.5 1.5V20a1.5 1.5 0 0 1-1.5 1.5H12.5a1.5 1.5 0 0 1-1.5-1.5V19.3"/>
</g></svg>
<svg style="left:1683px;top:436px;" width="16" height="19" viewBox="0 0 16 19"><g fill="#e0e0e0"><rect x="1" y="0.8" width="14" height="2"/><rect x="1" y="16" width="14" height="2"/>
<path d="M8 4l-3 3.3h2.2v4.4h-2.2l3 3.3l3-3.3h-2.2v-4.4h2.2z"/></g></svg>
<svg style="left:1717px;top:435px;" width="16" height="20" viewBox="0 0 16 20"><g fill="#e0e0e0"><rect x="1" y="8" width="14" height="1.6"/><rect x="1" y="10.6" width="14" height="1.6"/>
<path d="M8 7l-3-3.2h2.2v-3h1.6v3h2.2z"/><path d="M8 13.2l-3 3.2h2.2v3h1.6v-3h2.2z"/></g></svg>
<svg style="left:1750px;top:436px;" width="18" height="18" viewBox="0 0 18 18"><path d="M6.55 3.09L7.90 2.70L7.91 0.37L10.09 0.37L10.10 2.70L11.45 3.09L11.45 3.09L12.68 3.76L14.33 2.13L15.87 3.67L14.24 5.32L14.91 6.55L14.91 6.55L15.30 7.90L17.63 7.91L17.63 10.09L15.30 10.10L14.91 11.45L14.91 11.45L14.24 12.68L15.87 14.33L14.33 15.87L12.68 14.24L11.45 14.91L11.45 14.91L10.10 15.30L10.09 17.63L7.91 17.63L7.90 15.30L6.55 14.91L6.55 14.91L5.32 14.24L3.67 15.87L2.13 14.33L3.76 12.68L3.09 11.45L3.09 11.45L2.70 10.10L0.37 10.09L0.37 7.91L2.70 7.90L3.09 6.55L3.09 6.55L3.76 5.32L2.13 3.67L3.67 2.13L5.32 3.76L6.55 3.09Z" fill="#e0e0e0" stroke="#e0e0e0" stroke-width="1" stroke-linejoin="round"/><circle cx="9" cy="9" r="2.8" fill="#555555"/></svg>
<svg style="left:1787px;top:442px;" width="12" height="8" viewBox="0 0 12 8"><path d="M1 1.2l4.8 5l4.8-5" fill="none" stroke="#e0e0e0" stroke-width="1.8"/></svg>
<div class="a" style="left:1825px;top:37px;width:36px;height:771px;background:#555555;"></div>
<div class="a" style="left:1825px;top:129px;width:36px;height:1.6px;background:#393534;"></div>
<div class="a" style="left:1825px;top:398px;width:36px;height:1.6px;background:#393534;"></div>
<div class="a" style="left:1825px;top:447px;width:36px;height:1.6px;background:#393534;"></div>
<div class="a" style="left:1825px;top:627px;width:36px;height:1.6px;background:#393534;"></div>
<div class="a" style="left:1825px;top:720px;width:36px;height:1.6px;background:#393534;"></div>
<svg style="left:1824px;top:40px;" width="38" height="40" viewBox="0 0 38 40"><g fill="none" stroke="#e0e0e0" stroke-width="1.5" stroke-linecap="round" stroke-linejoin="round">
<path d="M15.5 25.5h-3.2a4.4 4.4 0 0 1-0.9-8.7a6.8 6.8 0 0 1 13.2-1.8a4.9 4.9 0 0 1 1.5 10.5h-2.6"/>
<path d="M19.4 15.5v16M19.4 22.5l-5-3.6M19.4 24.5l4.8-3.6"/></g></svg>
<svg style="left:1824px;top:85px;" width="38" height="38" viewBox="0 0 38 38"><g fill="none" stroke="#e0e0e0" stroke-width="1.5">
<path d="M14 24.4H6.3V7.2H29.7V14"/><path d="M14 24.4v2.5h-3"/>
<path d="M16.2 20.6v-4.1h4.3M26.7 16.5h4.3v4.1M31 28.8v4h-4.3M20.5 32.8h-4.3v-4"/></g>
<path d="M24 19.6l5 2.9v5.8l-5 2.9l-5-2.9v-5.8z" fill="#e0e0e0"/></svg>
<svg style="left:1824px;top:140px;" width="40" height="30" viewBox="0 0 40 30"><rect x="6.6" y="9.9" width="25.6" height="7.6" fill="none" stroke="#e0e0e0" stroke-width="1.5"/>
<rect x="5.9" y="18.9" width="26.3" height="2" fill="#e0e0e0"/>
<path d="M10 17v-3M13 17v-4.5M16 17v-3M19 17v-4.5M22 17v-3M25 17v-4.5M28 17v-3" stroke="#e0e0e0" stroke-width="1.1"/></svg>
<svg style="left:1824px;top:180px;" width="40" height="36" viewBox="0 0 40 36"><path d="M14 16L23.6 4.3V20L14 32.3z" fill="#e0e0e0"/>
<path d="M6 20.5L13.5 14H32.2L26.6 20.5z" fill="none" stroke="#e0e0e0" stroke-width="1.3"/>
<path d="M14 16L23.6 4.3V20L14 32.3z" fill="#e0e0e0" opacity="0.85"/></svg>
<svg style="left:1824px;top:226px;" width="40" height="32" viewBox="0 0 40 32"><g fill="none" stroke="#e0e0e0" stroke-width="1.2">
<path d="M7 10l6-5.5h18v16.5l-6 5.9h-18z"/><path d="M7 10h18v16.9M25 10l6-5.5"/>
<path d="M7 26.9l6-5.9h18M13 4.5v16.5"/></g>
<path d="M17.5 9v17.5l6-5.5v-17z" fill="#e0e0e0" opacity="0.9"/></svg>
<svg style="left:1824px;top:260px;" width="38" height="40" viewBox="0 0 38 40"><g fill="none" stroke="#e0e0e0" stroke-width="1.5">
<path d="M5.8 19.8L10.2 15.2H32V36H5.8z"/><path d="M6.6 37.2H32.6" stroke-width="1.2"/>
<path d="M5.8 25.2H32M17.4 15.2V36" stroke-dasharray="2 1.6" stroke-width="1.2"/>
<path d="M23.4 36V31.6H32"/></g></svg>
<svg style="left:1824px;top:310px;" width="38" height="40" viewBox="0 0 38 40"><circle cx="19.1" cy="19.7" r="8.4" fill="none" stroke="#e0e0e0" stroke-width="1.6"/>
<circle cx="19.1" cy="19.7" r="4.2" fill="#e0e0e0"/>
<path d="M19.1 9.2v2.2M19.1 28v2.2M8.6 19.7h2.2M27.4 19.7h2.2" stroke="#e0e0e0" stroke-width="1.8"/></svg>
<svg style="left:1829px;top:360px;" width="28" height="28" viewBox="0 0 28 28"><circle cx="14" cy="14" r="12.8" fill="none" stroke="#e0e0e0" stroke-width="1.1"/>
<path d="M9 22v-14.5c2.5-1.5 4.5 0.8 7 0.8c1.5 0 2.5-0.5 3.8-1v6.7c-1.3 0.5-2.3 1-3.8 1c-2.5 0-4.5-2.3-7-0.8" fill="none" stroke="#e0e0e0" stroke-width="1.2"/></svg>
<svg style="left:1824px;top:400px;" width="40" height="50" viewBox="0 0 40 50"><g stroke="#e0e0e0" stroke-width="1.1" fill="none">
<path d="M4.3 26.7L33.8 10.1M4.6 36.6L33.8 20.3M5.2 21.2L23.7 32.3M14.1 15L32.6 25.5"/></g>
<text x="4.6" y="19.3" font-family="Liberation Sans" font-size="5.5" fill="#e0e0e0" font-weight="bold">1</text>
<text x="14.6" y="13.2" font-family="Liberation Sans" font-size="5.5" fill="#e0e0e0" font-weight="bold">2</text>
<circle cx="9.3" cy="23.8" r="1.1" fill="#e0e0e0"/><circle cx="18" cy="28.8" r="1.1" fill="#e0e0e0"/></svg>
<div class="a" style="left:1831px;top:460px;width:24px;height:24px;border:1.6px dashed #e0e0e0"></div>
<svg style="left:1837px;top:466px;" width="12" height="12" viewBox="0 0 12 12"><g fill="none" stroke="#e0e0e0" stroke-width="1.1" stroke-linejoin="round">
<path d="M6 0.8l5 2.6v5.4l-5 2.6l-5-2.6v-5.4z"/><path d="M1 3.4l5 2.6l5-2.6M6 6v5.4"/></g></svg>
<div class="a" style="left:1831px;top:504px;width:24px;height:24px;border:1.6px dashed #e0e0e0"></div>
<svg style="left:1834px;top:509px;" width="20" height="14" viewBox="0 0 20 14"><path d="M0.5 7c2.5-4 6-6 9.5-6s7 2 9.5 6c-2.5 4-6 6-9.5 6s-7-2-9.5-6z" fill="#e0e0e0"/>
<circle cx="10" cy="7" r="3.2" fill="#555555"/><circle cx="10" cy="7" r="1.7" fill="#e0e0e0"/></svg>
<div class="a" style="left:1831px;top:548px;width:24px;height:24px;border:1.6px dashed #e0e0e0"></div>
<svg style="left:1834px;top:552px;" width="20" height="16" viewBox="0 0 20 16"><path d="M0.5 8c2.5-4 6-6 9.5-6s7 2 9.5 6c-2.5 4-6 6-9.5 6s-7-2-9.5-6z" fill="#e0e0e0"/>
<circle cx="10" cy="8" r="3.2" fill="#555555"/><circle cx="10" cy="8" r="1.7" fill="#e0e0e0"/>
<path d="M3 1l14.5 14.5" stroke="#555555" stroke-width="2.8"/><path d="M3 1l14.5 14.5" stroke="#e0e0e0" stroke-width="1.3"/></svg>
<div class="a" style="left:1831px;top:592px;width:24px;height:24px;border:1.6px dashed #e0e0e0"></div>
<div class="a" style="left:1841px;top:602px;width:16px;height:16px;background:#d8d8d8;"></div>
<svg style="left:1841px;top:602px;" width="16" height="16" viewBox="0 0 16 16"><path d="M3.5 3.5l9 9M12.5 3.5l-9 9" stroke="#555" stroke-width="1.3"/></svg>
<div class="a" style="left:1827px;top:637px;width:32px;height:32px;background:#8a8a8a;"></div>
<svg style="left:1827px;top:637px;" width="32" height="32" viewBox="0 0 32 32"><path d="M4.5 7.1L15.8 11.2V28.4L5.8 20.6z" fill="#e2e2e2"/>
<path d="M4.5 7.1L15.8 4.1L27.3 6.9L15.8 11.2z" fill="#939393"/>
<path d="M4.5 7.1L15.8 4.1L27.3 6.9L26.3 20.1L15.8 28.4L5.8 20.6z M15.8 11.2V28.4M4.5 7.1L15.8 11.2L27.3 6.9" fill="none" stroke="#ececec" stroke-width="1.3" stroke-linejoin="round"/></svg>
<div class="a" style="left:1827px;top:681px;width:32px;height:32px;background:#8a8a8a;"></div>
<svg style="left:1827px;top:681px;" width="32" height="32" viewBox="0 0 32 32"><g fill="none" stroke="#f0f0f0" stroke-width="1.7">
<ellipse cx="15.8" cy="15.9" rx="11.2" ry="4.8"/><ellipse cx="15.8" cy="15.9" rx="4.6" ry="10.6"/></g>
<path d="M15.8 12.6v3.3l-2.8 2.8M15.8 15.9l2.8 2.8" stroke="#f0f0f0" stroke-width="1" fill="none"/></svg>
<svg style="left:1827px;top:803px;" width="5" height="5" viewBox="0 0 5 5"><path d="M0 0v4h4z" fill="#f4f4f4"/></svg>
<div class="a" style="left:1861px;top:0px;width:3px;height:814px;background:#050505;"></div>
<svg style="left:520px;top:490px;" width="170" height="160" viewBox="0 0 170 160">
<defs><filter id="sh" x="-30%" y="-30%" width="160%" height="160%"><feGaussianBlur stdDeviation="2.2"/></filter></defs>
<g opacity="0.6" filter="url(#sh)" transform="translate(3 4)">
<path d="M21.2 136.5L95.2 43.6M21.2 136.5L143 103.8" stroke="#000" stroke-width="3.2" fill="none"/>
<path d="M103.8 32.4L89.1 40.1L101.2 47z M156.3 100.3L140.8 96.9L145.1 110.7z" fill="#000"/>
</g>
<path d="M21.2 136.5L95.2 43.6M21.2 136.5L143 103.8" stroke="#c80000" stroke-width="3.2" fill="none"/>
<path d="M103.8 32.4L89.1 40.1L101.2 47z M156.3 100.3L140.8 96.9L145.1 110.7z" fill="#c80000"/>
</svg>
</body></html>
